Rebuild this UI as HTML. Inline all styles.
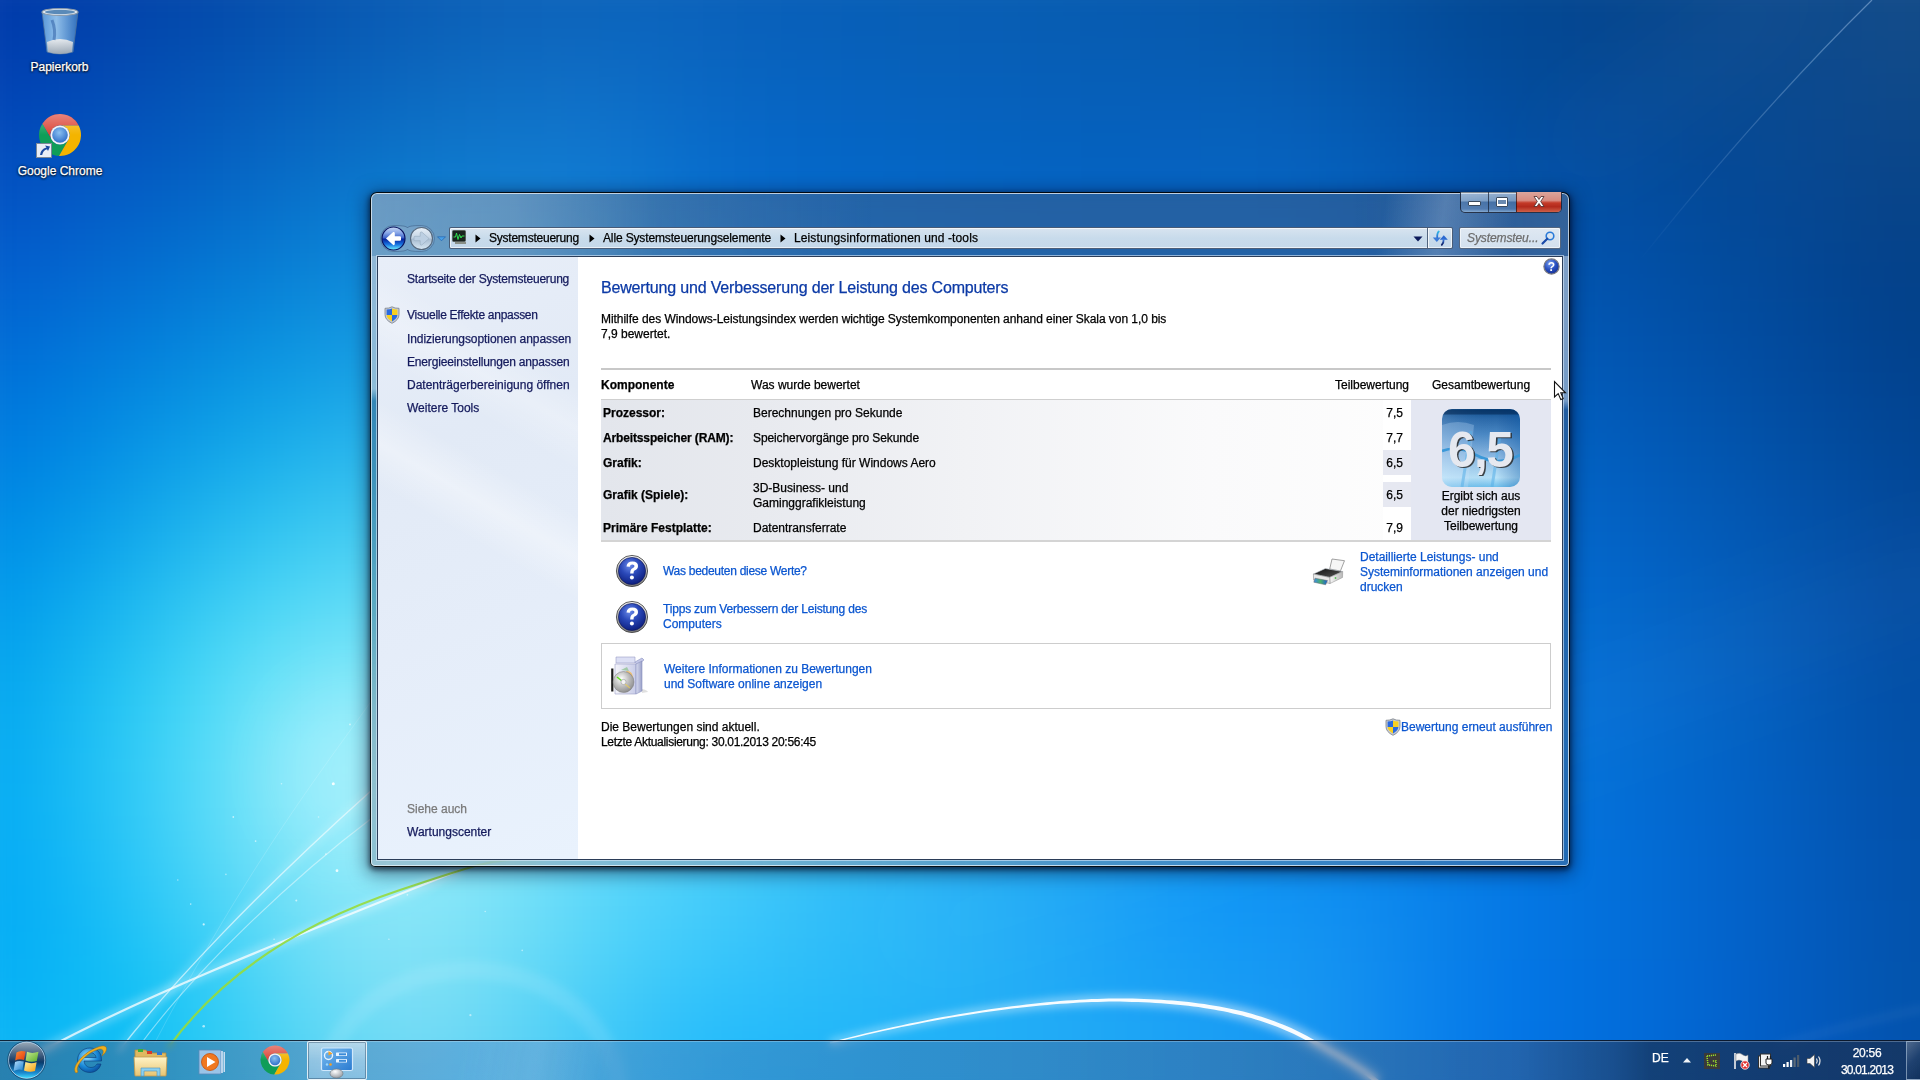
<!DOCTYPE html>
<html><head><meta charset="utf-8">
<style>
html,body{margin:0;padding:0;}
body{width:1920px;height:1080px;overflow:hidden;position:relative;font-family:"Liberation Sans",sans-serif;font-size:12px;color:#000;}
.a{position:absolute;white-space:nowrap;line-height:15px;-webkit-text-stroke:0.25px currentColor;}
/* window */
#win{position:absolute;left:370px;top:192px;width:1200px;height:675px;box-sizing:border-box;border:1px solid rgba(0,0,0,0.9);border-radius:7px 7px 5px 5px;
 box-shadow:0 2px 5px 1px rgba(0,0,20,0.55), 0 4px 18px 3px rgba(0,10,40,0.5), inset 0 0 0 1px rgba(255,255,255,0.7);
 backdrop-filter:blur(8px);
 background:rgba(85,92,112,0.38);}
#wintitle{position:absolute;left:371px;top:193px;width:1198px;height:63px;border-radius:6px 6px 0 0;
 background:
  linear-gradient(100deg, rgba(230,235,240,0.0) 0%, rgba(230,235,240,0.0) 84%, rgba(210,222,238,0.26) 89%, rgba(200,215,235,0.0) 95%),
  linear-gradient(90deg, rgba(225,232,238,0.36) 0%, rgba(220,228,236,0.3) 12%, rgba(170,180,195,0.12) 24%, rgba(90,95,115,0.0) 42%, rgba(85,90,110,0.0) 82%, rgba(140,150,170,0.1) 94%, rgba(170,185,205,0.14) 100%);}
#winleft{position:absolute;left:371px;top:256px;width:6px;height:604px;
 background:linear-gradient(180deg, rgba(230,238,245,0.55) 0%, rgba(230,238,245,0.5) 22%, rgba(60,110,160,0.15) 24%, rgba(120,170,210,0.0) 60%, rgba(200,235,250,0.25) 100%);}
#winright{position:absolute;left:1563px;top:256px;width:6px;height:604px;
 background:linear-gradient(180deg, rgba(220,232,245,0.5) 0%, rgba(220,232,245,0.45) 24%, rgba(60,110,160,0.0) 25.5%, rgba(120,170,210,0.0) 100%);}
#winbottom{position:absolute;left:371px;top:860px;width:1198px;height:6px;border-radius:0 0 4px 4px;
 background:linear-gradient(90deg, rgba(210,230,245,0.35) 0%, rgba(210,230,245,0.3) 30%, rgba(200,220,240,0.15) 60%, rgba(180,200,230,0.05) 100%);}
#content{position:absolute;left:377px;top:256px;width:1186px;height:604px;box-sizing:border-box;border:1px solid rgba(20,40,70,0.9);background:#fff;
 box-shadow:0 0 0 1px rgba(220,235,250,0.6);}
#lpanel{position:absolute;left:378px;top:257px;width:200px;height:602px;
 background:
  linear-gradient(30deg, rgba(255,255,255,0) 0%, rgba(255,255,255,0) 52%, rgba(255,255,255,0.35) 58%, rgba(255,255,255,0) 64%, rgba(255,255,255,0) 70%, rgba(255,255,255,0.25) 76%, rgba(255,255,255,0) 82%),
  linear-gradient(160deg,#e8eef8 0%,#e2eaf6 30%,#e5edf9 60%,#e9f2fd 100%);}
.lnk{color:#141a5c;}
.blue{color:#0b56d0;}
</style></head>
<body>
<svg id="wallsvg" style="position:absolute;left:0;top:0" width="1920" height="1080" viewBox="0 0 1920 1080"><defs><filter id="wb" color-interpolation-filters="sRGB" x="-5%" y="-5%" width="110%" height="110%"><feGaussianBlur stdDeviation="30" color-interpolation-filters="sRGB"/></filter></defs><g filter="url(#wb)"><rect x="-60" y="-60" width="60" height="60" fill="#0038a8"/><rect x="0" y="-60" width="60" height="60" fill="#003aa8"/><rect x="60" y="-60" width="60" height="60" fill="#013fa8"/><rect x="120" y="-60" width="60" height="60" fill="#0344a9"/><rect x="180" y="-60" width="60" height="60" fill="#0449a9"/><rect x="240" y="-60" width="60" height="60" fill="#064fac"/><rect x="300" y="-60" width="60" height="60" fill="#0755af"/><rect x="360" y="-60" width="60" height="60" fill="#095ab2"/><rect x="420" y="-60" width="60" height="60" fill="#0b5eb5"/><rect x="480" y="-60" width="60" height="60" fill="#0c61b8"/><rect x="540" y="-60" width="60" height="60" fill="#0d62b9"/><rect x="600" y="-60" width="60" height="60" fill="#0c62b9"/><rect x="660" y="-60" width="60" height="60" fill="#0b61b9"/><rect x="720" y="-60" width="60" height="60" fill="#095fb8"/><rect x="780" y="-60" width="60" height="60" fill="#085eb6"/><rect x="840" y="-60" width="60" height="60" fill="#085eb5"/><rect x="900" y="-60" width="60" height="60" fill="#085db3"/><rect x="960" y="-60" width="60" height="60" fill="#085db2"/><rect x="1020" y="-60" width="60" height="60" fill="#085cb0"/><rect x="1080" y="-60" width="60" height="60" fill="#075aae"/><rect x="1140" y="-60" width="60" height="60" fill="#0759ad"/><rect x="1200" y="-60" width="60" height="60" fill="#0758aa"/><rect x="1260" y="-60" width="60" height="60" fill="#0655a7"/><rect x="1320" y="-60" width="60" height="60" fill="#0552a2"/><rect x="1380" y="-60" width="60" height="60" fill="#044e9b"/><rect x="1440" y="-60" width="60" height="60" fill="#044995"/><rect x="1500" y="-60" width="60" height="60" fill="#044791"/><rect x="1560" y="-60" width="60" height="60" fill="#05468e"/><rect x="1620" y="-60" width="60" height="60" fill="#08478d"/><rect x="1680" y="-60" width="60" height="60" fill="#0a488c"/><rect x="1740" y="-60" width="60" height="60" fill="#0d498c"/><rect x="1800" y="-60" width="60" height="60" fill="#104a8b"/><rect x="1860" y="-60" width="60" height="60" fill="#134b89"/><rect x="1920" y="-60" width="60" height="60" fill="#144a87"/><rect x="1980" y="-60" width="60" height="60" fill="#144a87"/><rect x="-60" y="0" width="60" height="60" fill="#003bac"/><rect x="0" y="0" width="60" height="60" fill="#003eac"/><rect x="60" y="0" width="60" height="60" fill="#0242ac"/><rect x="120" y="0" width="60" height="60" fill="#0348ad"/><rect x="180" y="0" width="60" height="60" fill="#044dae"/><rect x="240" y="0" width="60" height="60" fill="#0653b0"/><rect x="300" y="0" width="60" height="60" fill="#0859b3"/><rect x="360" y="0" width="60" height="60" fill="#0a5eb7"/><rect x="420" y="0" width="60" height="60" fill="#0c62b9"/><rect x="480" y="0" width="60" height="60" fill="#0d65bc"/><rect x="540" y="0" width="60" height="60" fill="#0d66bd"/><rect x="600" y="0" width="60" height="60" fill="#0c66be"/><rect x="660" y="0" width="60" height="60" fill="#0b64bd"/><rect x="720" y="0" width="60" height="60" fill="#0961bb"/><rect x="780" y="0" width="60" height="60" fill="#0860ba"/><rect x="840" y="0" width="60" height="60" fill="#075fb8"/><rect x="900" y="0" width="60" height="60" fill="#085fb6"/><rect x="960" y="0" width="60" height="60" fill="#085eb5"/><rect x="1020" y="0" width="60" height="60" fill="#075db3"/><rect x="1080" y="0" width="60" height="60" fill="#075cb2"/><rect x="1140" y="0" width="60" height="60" fill="#075bb0"/><rect x="1200" y="0" width="60" height="60" fill="#065aae"/><rect x="1260" y="0" width="60" height="60" fill="#0658ab"/><rect x="1320" y="0" width="60" height="60" fill="#0554a6"/><rect x="1380" y="0" width="60" height="60" fill="#044f9f"/><rect x="1440" y="0" width="60" height="60" fill="#034b99"/><rect x="1500" y="0" width="60" height="60" fill="#034894"/><rect x="1560" y="0" width="60" height="60" fill="#054791"/><rect x="1620" y="0" width="60" height="60" fill="#07478f"/><rect x="1680" y="0" width="60" height="60" fill="#09488e"/><rect x="1740" y="0" width="60" height="60" fill="#0c498d"/><rect x="1800" y="0" width="60" height="60" fill="#0f4a8c"/><rect x="1860" y="0" width="60" height="60" fill="#124b8a"/><rect x="1920" y="0" width="60" height="60" fill="#124a88"/><rect x="1980" y="0" width="60" height="60" fill="#124a88"/><rect x="-60" y="60" width="60" height="60" fill="#0043b4"/><rect x="0" y="60" width="60" height="60" fill="#0145b5"/><rect x="60" y="60" width="60" height="60" fill="#024ab5"/><rect x="120" y="60" width="60" height="60" fill="#0450b5"/><rect x="180" y="60" width="60" height="60" fill="#0556b7"/><rect x="240" y="60" width="60" height="60" fill="#065cb9"/><rect x="300" y="60" width="60" height="60" fill="#0862bc"/><rect x="360" y="60" width="60" height="60" fill="#0b67bf"/><rect x="420" y="60" width="60" height="60" fill="#0d6cc2"/><rect x="480" y="60" width="60" height="60" fill="#0e6ec4"/><rect x="540" y="60" width="60" height="60" fill="#0f6fc6"/><rect x="600" y="60" width="60" height="60" fill="#0d6cc5"/><rect x="660" y="60" width="60" height="60" fill="#0a68c4"/><rect x="720" y="60" width="60" height="60" fill="#0865c2"/><rect x="780" y="60" width="60" height="60" fill="#0663c0"/><rect x="840" y="60" width="60" height="60" fill="#0662be"/><rect x="900" y="60" width="60" height="60" fill="#0661bc"/><rect x="960" y="60" width="60" height="60" fill="#0660bb"/><rect x="1020" y="60" width="60" height="60" fill="#065fb9"/><rect x="1080" y="60" width="60" height="60" fill="#065fb8"/><rect x="1140" y="60" width="60" height="60" fill="#065eb7"/><rect x="1200" y="60" width="60" height="60" fill="#065eb6"/><rect x="1260" y="60" width="60" height="60" fill="#065cb3"/><rect x="1320" y="60" width="60" height="60" fill="#0558ae"/><rect x="1380" y="60" width="60" height="60" fill="#0453a7"/><rect x="1440" y="60" width="60" height="60" fill="#034ea1"/><rect x="1500" y="60" width="60" height="60" fill="#034b9b"/><rect x="1560" y="60" width="60" height="60" fill="#044997"/><rect x="1620" y="60" width="60" height="60" fill="#054994"/><rect x="1680" y="60" width="60" height="60" fill="#074992"/><rect x="1740" y="60" width="60" height="60" fill="#0a4990"/><rect x="1800" y="60" width="60" height="60" fill="#0c498e"/><rect x="1860" y="60" width="60" height="60" fill="#0e498a"/><rect x="1920" y="60" width="60" height="60" fill="#0f4888"/><rect x="1980" y="60" width="60" height="60" fill="#0f4888"/><rect x="-60" y="120" width="60" height="60" fill="#014bbd"/><rect x="0" y="120" width="60" height="60" fill="#024ebd"/><rect x="60" y="120" width="60" height="60" fill="#0353be"/><rect x="120" y="120" width="60" height="60" fill="#0458bf"/><rect x="180" y="120" width="60" height="60" fill="#055fc0"/><rect x="240" y="120" width="60" height="60" fill="#0766c2"/><rect x="300" y="120" width="60" height="60" fill="#096cc5"/><rect x="360" y="120" width="60" height="60" fill="#0c72c8"/><rect x="420" y="120" width="60" height="60" fill="#0e75ca"/><rect x="480" y="120" width="60" height="60" fill="#1077cc"/><rect x="540" y="120" width="60" height="60" fill="#1077cd"/><rect x="600" y="120" width="60" height="60" fill="#0e73cd"/><rect x="660" y="120" width="60" height="60" fill="#096dca"/><rect x="720" y="120" width="60" height="60" fill="#0768c8"/><rect x="780" y="120" width="60" height="60" fill="#0566c6"/><rect x="840" y="120" width="60" height="60" fill="#0565c4"/><rect x="900" y="120" width="60" height="60" fill="#0564c2"/><rect x="960" y="120" width="60" height="60" fill="#0563c0"/><rect x="1020" y="120" width="60" height="60" fill="#0562bf"/><rect x="1080" y="120" width="60" height="60" fill="#0561be"/><rect x="1140" y="120" width="60" height="60" fill="#0661be"/><rect x="1200" y="120" width="60" height="60" fill="#0662bd"/><rect x="1260" y="120" width="60" height="60" fill="#0661bc"/><rect x="1320" y="120" width="60" height="60" fill="#055db7"/><rect x="1380" y="120" width="60" height="60" fill="#0457b0"/><rect x="1440" y="120" width="60" height="60" fill="#0352a9"/><rect x="1500" y="120" width="60" height="60" fill="#034ea3"/><rect x="1560" y="120" width="60" height="60" fill="#034c9e"/><rect x="1620" y="120" width="60" height="60" fill="#044a9a"/><rect x="1680" y="120" width="60" height="60" fill="#054996"/><rect x="1740" y="120" width="60" height="60" fill="#074993"/><rect x="1800" y="120" width="60" height="60" fill="#09488f"/><rect x="1860" y="120" width="60" height="60" fill="#0b468a"/><rect x="1920" y="120" width="60" height="60" fill="#0b4688"/><rect x="1980" y="120" width="60" height="60" fill="#0b4688"/><rect x="-60" y="180" width="60" height="60" fill="#0154c5"/><rect x="0" y="180" width="60" height="60" fill="#0357c6"/><rect x="60" y="180" width="60" height="60" fill="#045dc7"/><rect x="120" y="180" width="60" height="60" fill="#0463c8"/><rect x="180" y="180" width="60" height="60" fill="#056ac9"/><rect x="240" y="180" width="60" height="60" fill="#0771cc"/><rect x="300" y="180" width="60" height="60" fill="#0a78ce"/><rect x="360" y="180" width="60" height="60" fill="#0d7dd0"/><rect x="420" y="180" width="60" height="60" fill="#1080d2"/><rect x="480" y="180" width="60" height="60" fill="#1280d3"/><rect x="540" y="180" width="60" height="60" fill="#127ed4"/><rect x="600" y="180" width="60" height="60" fill="#0e79d2"/><rect x="660" y="180" width="60" height="60" fill="#0971d0"/><rect x="720" y="180" width="60" height="60" fill="#076ccd"/><rect x="780" y="180" width="60" height="60" fill="#066acb"/><rect x="840" y="180" width="60" height="60" fill="#0669ca"/><rect x="900" y="180" width="60" height="60" fill="#0667c8"/><rect x="960" y="180" width="60" height="60" fill="#0566c6"/><rect x="1020" y="180" width="60" height="60" fill="#0564c4"/><rect x="1080" y="180" width="60" height="60" fill="#0564c3"/><rect x="1140" y="180" width="60" height="60" fill="#0564c3"/><rect x="1200" y="180" width="60" height="60" fill="#0664c3"/><rect x="1260" y="180" width="60" height="60" fill="#0663c2"/><rect x="1320" y="180" width="60" height="60" fill="#0560bd"/><rect x="1380" y="180" width="60" height="60" fill="#045bb7"/><rect x="1440" y="180" width="60" height="60" fill="#0456b1"/><rect x="1500" y="180" width="60" height="60" fill="#0352aa"/><rect x="1560" y="180" width="60" height="60" fill="#024fa5"/><rect x="1620" y="180" width="60" height="60" fill="#034da0"/><rect x="1680" y="180" width="60" height="60" fill="#034a9a"/><rect x="1740" y="180" width="60" height="60" fill="#054895"/><rect x="1800" y="180" width="60" height="60" fill="#064690"/><rect x="1860" y="180" width="60" height="60" fill="#07448a"/><rect x="1920" y="180" width="60" height="60" fill="#084388"/><rect x="1980" y="180" width="60" height="60" fill="#084388"/><rect x="-60" y="240" width="60" height="60" fill="#015ecd"/><rect x="0" y="240" width="60" height="60" fill="#0361ce"/><rect x="60" y="240" width="60" height="60" fill="#0468cf"/><rect x="120" y="240" width="60" height="60" fill="#046fd1"/><rect x="180" y="240" width="60" height="60" fill="#0577d3"/><rect x="240" y="240" width="60" height="60" fill="#087ed5"/><rect x="300" y="240" width="60" height="60" fill="#0c85d7"/><rect x="360" y="240" width="60" height="60" fill="#1089d8"/><rect x="420" y="240" width="60" height="60" fill="#148bda"/><rect x="480" y="240" width="60" height="60" fill="#168ada"/><rect x="540" y="240" width="60" height="60" fill="#1587da"/><rect x="600" y="240" width="60" height="60" fill="#1280d8"/><rect x="660" y="240" width="60" height="60" fill="#0d79d6"/><rect x="720" y="240" width="60" height="60" fill="#0a74d3"/><rect x="780" y="240" width="60" height="60" fill="#0971d1"/><rect x="840" y="240" width="60" height="60" fill="#086fcf"/><rect x="900" y="240" width="60" height="60" fill="#076dcd"/><rect x="960" y="240" width="60" height="60" fill="#076bcc"/><rect x="1020" y="240" width="60" height="60" fill="#0669ca"/><rect x="1080" y="240" width="60" height="60" fill="#0668c9"/><rect x="1140" y="240" width="60" height="60" fill="#0568c9"/><rect x="1200" y="240" width="60" height="60" fill="#0567c9"/><rect x="1260" y="240" width="60" height="60" fill="#0566c7"/><rect x="1320" y="240" width="60" height="60" fill="#0563c3"/><rect x="1380" y="240" width="60" height="60" fill="#045ebe"/><rect x="1440" y="240" width="60" height="60" fill="#045ab8"/><rect x="1500" y="240" width="60" height="60" fill="#0356b2"/><rect x="1560" y="240" width="60" height="60" fill="#0252ac"/><rect x="1620" y="240" width="60" height="60" fill="#024fa5"/><rect x="1680" y="240" width="60" height="60" fill="#024c9f"/><rect x="1740" y="240" width="60" height="60" fill="#034998"/><rect x="1800" y="240" width="60" height="60" fill="#034592"/><rect x="1860" y="240" width="60" height="60" fill="#04428b"/><rect x="1920" y="240" width="60" height="60" fill="#054188"/><rect x="1980" y="240" width="60" height="60" fill="#054188"/><rect x="-60" y="300" width="60" height="60" fill="#0068d4"/><rect x="0" y="300" width="60" height="60" fill="#016cd5"/><rect x="60" y="300" width="60" height="60" fill="#0374d7"/><rect x="120" y="300" width="60" height="60" fill="#047cd9"/><rect x="180" y="300" width="60" height="60" fill="#0685db"/><rect x="240" y="300" width="60" height="60" fill="#0a8ddd"/><rect x="300" y="300" width="60" height="60" fill="#1094df"/><rect x="360" y="300" width="60" height="60" fill="#1697e0"/><rect x="420" y="300" width="60" height="60" fill="#1a98e0"/><rect x="480" y="300" width="60" height="60" fill="#1c96e0"/><rect x="540" y="300" width="60" height="60" fill="#1c92df"/><rect x="600" y="300" width="60" height="60" fill="#198bde"/><rect x="660" y="300" width="60" height="60" fill="#1485db"/><rect x="720" y="300" width="60" height="60" fill="#117fd9"/><rect x="780" y="300" width="60" height="60" fill="#0e7bd7"/><rect x="840" y="300" width="60" height="60" fill="#0c77d5"/><rect x="900" y="300" width="60" height="60" fill="#0b74d4"/><rect x="960" y="300" width="60" height="60" fill="#0972d2"/><rect x="1020" y="300" width="60" height="60" fill="#086fd1"/><rect x="1080" y="300" width="60" height="60" fill="#076dd0"/><rect x="1140" y="300" width="60" height="60" fill="#066ccf"/><rect x="1200" y="300" width="60" height="60" fill="#066bce"/><rect x="1260" y="300" width="60" height="60" fill="#0569cc"/><rect x="1320" y="300" width="60" height="60" fill="#0566c9"/><rect x="1380" y="300" width="60" height="60" fill="#0462c4"/><rect x="1440" y="300" width="60" height="60" fill="#035ebe"/><rect x="1500" y="300" width="60" height="60" fill="#035ab8"/><rect x="1560" y="300" width="60" height="60" fill="#0256b2"/><rect x="1620" y="300" width="60" height="60" fill="#0252ab"/><rect x="1680" y="300" width="60" height="60" fill="#024ea4"/><rect x="1740" y="300" width="60" height="60" fill="#024a9d"/><rect x="1800" y="300" width="60" height="60" fill="#024695"/><rect x="1860" y="300" width="60" height="60" fill="#02428d"/><rect x="1920" y="300" width="60" height="60" fill="#03418a"/><rect x="1980" y="300" width="60" height="60" fill="#03418a"/><rect x="-60" y="360" width="60" height="60" fill="#0073da"/><rect x="0" y="360" width="60" height="60" fill="#0077db"/><rect x="60" y="360" width="60" height="60" fill="#0280de"/><rect x="120" y="360" width="60" height="60" fill="#058ae0"/><rect x="180" y="360" width="60" height="60" fill="#0994e2"/><rect x="240" y="360" width="60" height="60" fill="#0f9de5"/><rect x="300" y="360" width="60" height="60" fill="#17a3e6"/><rect x="360" y="360" width="60" height="60" fill="#1fa6e6"/><rect x="420" y="360" width="60" height="60" fill="#24a6e6"/><rect x="480" y="360" width="60" height="60" fill="#27a4e6"/><rect x="540" y="360" width="60" height="60" fill="#269fe5"/><rect x="600" y="360" width="60" height="60" fill="#2298e3"/><rect x="660" y="360" width="60" height="60" fill="#1e91e1"/><rect x="720" y="360" width="60" height="60" fill="#198bdf"/><rect x="780" y="360" width="60" height="60" fill="#1585dd"/><rect x="840" y="360" width="60" height="60" fill="#1281db"/><rect x="900" y="360" width="60" height="60" fill="#0f7dd9"/><rect x="960" y="360" width="60" height="60" fill="#0d79d8"/><rect x="1020" y="360" width="60" height="60" fill="#0a76d7"/><rect x="1080" y="360" width="60" height="60" fill="#0974d6"/><rect x="1140" y="360" width="60" height="60" fill="#0772d5"/><rect x="1200" y="360" width="60" height="60" fill="#066fd3"/><rect x="1260" y="360" width="60" height="60" fill="#056dd1"/><rect x="1320" y="360" width="60" height="60" fill="#056ace"/><rect x="1380" y="360" width="60" height="60" fill="#0466ca"/><rect x="1440" y="360" width="60" height="60" fill="#0362c5"/><rect x="1500" y="360" width="60" height="60" fill="#035ebf"/><rect x="1560" y="360" width="60" height="60" fill="#025ab8"/><rect x="1620" y="360" width="60" height="60" fill="#0256b2"/><rect x="1680" y="360" width="60" height="60" fill="#0252aa"/><rect x="1740" y="360" width="60" height="60" fill="#024da2"/><rect x="1800" y="360" width="60" height="60" fill="#02489a"/><rect x="1860" y="360" width="60" height="60" fill="#024492"/><rect x="1920" y="360" width="60" height="60" fill="#02428e"/><rect x="1980" y="360" width="60" height="60" fill="#02428e"/><rect x="-60" y="420" width="60" height="60" fill="#007de0"/><rect x="0" y="420" width="60" height="60" fill="#0082e1"/><rect x="60" y="420" width="60" height="60" fill="#048ce3"/><rect x="120" y="420" width="60" height="60" fill="#0a98e6"/><rect x="180" y="420" width="60" height="60" fill="#11a3e8"/><rect x="240" y="420" width="60" height="60" fill="#1aadea"/><rect x="300" y="420" width="60" height="60" fill="#25b4ec"/><rect x="360" y="420" width="60" height="60" fill="#2db6ec"/><rect x="420" y="420" width="60" height="60" fill="#33b5ec"/><rect x="480" y="420" width="60" height="60" fill="#34b2eb"/><rect x="540" y="420" width="60" height="60" fill="#32acea"/><rect x="600" y="420" width="60" height="60" fill="#2ea5e8"/><rect x="660" y="420" width="60" height="60" fill="#299ee6"/><rect x="720" y="420" width="60" height="60" fill="#2397e4"/><rect x="780" y="420" width="60" height="60" fill="#1d90e3"/><rect x="840" y="420" width="60" height="60" fill="#198be1"/><rect x="900" y="420" width="60" height="60" fill="#1486df"/><rect x="960" y="420" width="60" height="60" fill="#1181de"/><rect x="1020" y="420" width="60" height="60" fill="#0d7edd"/><rect x="1080" y="420" width="60" height="60" fill="#0b7adc"/><rect x="1140" y="420" width="60" height="60" fill="#0977da"/><rect x="1200" y="420" width="60" height="60" fill="#0774d9"/><rect x="1260" y="420" width="60" height="60" fill="#0671d7"/><rect x="1320" y="420" width="60" height="60" fill="#056ed4"/><rect x="1380" y="420" width="60" height="60" fill="#046ad0"/><rect x="1440" y="420" width="60" height="60" fill="#0367cb"/><rect x="1500" y="420" width="60" height="60" fill="#0363c5"/><rect x="1560" y="420" width="60" height="60" fill="#025fbf"/><rect x="1620" y="420" width="60" height="60" fill="#025ab8"/><rect x="1680" y="420" width="60" height="60" fill="#0256b0"/><rect x="1740" y="420" width="60" height="60" fill="#0251a8"/><rect x="1800" y="420" width="60" height="60" fill="#024c9f"/><rect x="1860" y="420" width="60" height="60" fill="#024797"/><rect x="1920" y="420" width="60" height="60" fill="#024593"/><rect x="1980" y="420" width="60" height="60" fill="#024593"/><rect x="-60" y="480" width="60" height="60" fill="#0088e4"/><rect x="0" y="480" width="60" height="60" fill="#008ee5"/><rect x="60" y="480" width="60" height="60" fill="#0899e8"/><rect x="120" y="480" width="60" height="60" fill="#12a6ea"/><rect x="180" y="480" width="60" height="60" fill="#1eb3ed"/><rect x="240" y="480" width="60" height="60" fill="#2bbeef"/><rect x="300" y="480" width="60" height="60" fill="#37c4f0"/><rect x="360" y="480" width="60" height="60" fill="#40c6f1"/><rect x="420" y="480" width="60" height="60" fill="#44c4f0"/><rect x="480" y="480" width="60" height="60" fill="#44c0f0"/><rect x="540" y="480" width="60" height="60" fill="#41b9ee"/><rect x="600" y="480" width="60" height="60" fill="#3bb2ed"/><rect x="660" y="480" width="60" height="60" fill="#34aaeb"/><rect x="720" y="480" width="60" height="60" fill="#2ca3e9"/><rect x="780" y="480" width="60" height="60" fill="#269ce8"/><rect x="840" y="480" width="60" height="60" fill="#1f95e6"/><rect x="900" y="480" width="60" height="60" fill="#1a8fe4"/><rect x="960" y="480" width="60" height="60" fill="#158ae3"/><rect x="1020" y="480" width="60" height="60" fill="#1085e2"/><rect x="1080" y="480" width="60" height="60" fill="#0d81e1"/><rect x="1140" y="480" width="60" height="60" fill="#0a7de0"/><rect x="1200" y="480" width="60" height="60" fill="#087ade"/><rect x="1260" y="480" width="60" height="60" fill="#0676dc"/><rect x="1320" y="480" width="60" height="60" fill="#0573d9"/><rect x="1380" y="480" width="60" height="60" fill="#046fd5"/><rect x="1440" y="480" width="60" height="60" fill="#036bd0"/><rect x="1500" y="480" width="60" height="60" fill="#0367cb"/><rect x="1560" y="480" width="60" height="60" fill="#0363c5"/><rect x="1620" y="480" width="60" height="60" fill="#035ebe"/><rect x="1680" y="480" width="60" height="60" fill="#035ab6"/><rect x="1740" y="480" width="60" height="60" fill="#0354ae"/><rect x="1800" y="480" width="60" height="60" fill="#034fa5"/><rect x="1860" y="480" width="60" height="60" fill="#034a9c"/><rect x="1920" y="480" width="60" height="60" fill="#034798"/><rect x="1980" y="480" width="60" height="60" fill="#034798"/><rect x="-60" y="540" width="60" height="60" fill="#0094e9"/><rect x="0" y="540" width="60" height="60" fill="#0399ea"/><rect x="60" y="540" width="60" height="60" fill="#0ea6ec"/><rect x="120" y="540" width="60" height="60" fill="#1db5ee"/><rect x="180" y="540" width="60" height="60" fill="#2ec2f1"/><rect x="240" y="540" width="60" height="60" fill="#3fcdf3"/><rect x="300" y="540" width="60" height="60" fill="#4dd3f4"/><rect x="360" y="540" width="60" height="60" fill="#56d4f5"/><rect x="420" y="540" width="60" height="60" fill="#58d1f4"/><rect x="480" y="540" width="60" height="60" fill="#56ccf3"/><rect x="540" y="540" width="60" height="60" fill="#4fc5f2"/><rect x="600" y="540" width="60" height="60" fill="#47bef1"/><rect x="660" y="540" width="60" height="60" fill="#3eb6ef"/><rect x="720" y="540" width="60" height="60" fill="#35adee"/><rect x="780" y="540" width="60" height="60" fill="#2da6ec"/><rect x="840" y="540" width="60" height="60" fill="#269feb"/><rect x="900" y="540" width="60" height="60" fill="#1f98e9"/><rect x="960" y="540" width="60" height="60" fill="#1992e8"/><rect x="1020" y="540" width="60" height="60" fill="#148ce7"/><rect x="1080" y="540" width="60" height="60" fill="#0f87e6"/><rect x="1140" y="540" width="60" height="60" fill="#0b83e5"/><rect x="1200" y="540" width="60" height="60" fill="#097fe3"/><rect x="1260" y="540" width="60" height="60" fill="#077be1"/><rect x="1320" y="540" width="60" height="60" fill="#0577de"/><rect x="1380" y="540" width="60" height="60" fill="#0473da"/><rect x="1440" y="540" width="60" height="60" fill="#036fd6"/><rect x="1500" y="540" width="60" height="60" fill="#036bd1"/><rect x="1560" y="540" width="60" height="60" fill="#0367cb"/><rect x="1620" y="540" width="60" height="60" fill="#0362c4"/><rect x="1680" y="540" width="60" height="60" fill="#035dbc"/><rect x="1740" y="540" width="60" height="60" fill="#0358b3"/><rect x="1800" y="540" width="60" height="60" fill="#0352aa"/><rect x="1860" y="540" width="60" height="60" fill="#034ca1"/><rect x="1920" y="540" width="60" height="60" fill="#034a9c"/><rect x="1980" y="540" width="60" height="60" fill="#034a9c"/><rect x="-60" y="600" width="60" height="60" fill="#019dec"/><rect x="0" y="600" width="60" height="60" fill="#07a4ed"/><rect x="60" y="600" width="60" height="60" fill="#15b3ef"/><rect x="120" y="600" width="60" height="60" fill="#28c2f2"/><rect x="180" y="600" width="60" height="60" fill="#3fd0f4"/><rect x="240" y="600" width="60" height="60" fill="#55daf6"/><rect x="300" y="600" width="60" height="60" fill="#66dff7"/><rect x="360" y="600" width="60" height="60" fill="#6de0f7"/><rect x="420" y="600" width="60" height="60" fill="#6ddcf7"/><rect x="480" y="600" width="60" height="60" fill="#67d7f6"/><rect x="540" y="600" width="60" height="60" fill="#5dd0f5"/><rect x="600" y="600" width="60" height="60" fill="#52c8f4"/><rect x="660" y="600" width="60" height="60" fill="#47bff3"/><rect x="720" y="600" width="60" height="60" fill="#3db7f1"/><rect x="780" y="600" width="60" height="60" fill="#34aff0"/><rect x="840" y="600" width="60" height="60" fill="#2ba7ee"/><rect x="900" y="600" width="60" height="60" fill="#23a0ed"/><rect x="960" y="600" width="60" height="60" fill="#1c99ec"/><rect x="1020" y="600" width="60" height="60" fill="#1693eb"/><rect x="1080" y="600" width="60" height="60" fill="#118eea"/><rect x="1140" y="600" width="60" height="60" fill="#0d88e9"/><rect x="1200" y="600" width="60" height="60" fill="#0984e8"/><rect x="1260" y="600" width="60" height="60" fill="#077fe5"/><rect x="1320" y="600" width="60" height="60" fill="#067be3"/><rect x="1380" y="600" width="60" height="60" fill="#0577df"/><rect x="1440" y="600" width="60" height="60" fill="#0473db"/><rect x="1500" y="600" width="60" height="60" fill="#036fd6"/><rect x="1560" y="600" width="60" height="60" fill="#036bd0"/><rect x="1620" y="600" width="60" height="60" fill="#0366c9"/><rect x="1680" y="600" width="60" height="60" fill="#0361c1"/><rect x="1740" y="600" width="60" height="60" fill="#035bb8"/><rect x="1800" y="600" width="60" height="60" fill="#0354ae"/><rect x="1860" y="600" width="60" height="60" fill="#034fa5"/><rect x="1920" y="600" width="60" height="60" fill="#034ca0"/><rect x="1980" y="600" width="60" height="60" fill="#034ca0"/><rect x="-60" y="660" width="60" height="60" fill="#04a5ef"/><rect x="0" y="660" width="60" height="60" fill="#0aacf0"/><rect x="60" y="660" width="60" height="60" fill="#1bbcf2"/><rect x="120" y="660" width="60" height="60" fill="#31ccf4"/><rect x="180" y="660" width="60" height="60" fill="#4ed9f6"/><rect x="240" y="660" width="60" height="60" fill="#6be2f8"/><rect x="300" y="660" width="60" height="60" fill="#7ee7f9"/><rect x="360" y="660" width="60" height="60" fill="#83e8f9"/><rect x="420" y="660" width="60" height="60" fill="#7ee4f9"/><rect x="480" y="660" width="60" height="60" fill="#74def8"/><rect x="540" y="660" width="60" height="60" fill="#68d7f8"/><rect x="600" y="660" width="60" height="60" fill="#5bcff7"/><rect x="660" y="660" width="60" height="60" fill="#4ec7f6"/><rect x="720" y="660" width="60" height="60" fill="#42bff4"/><rect x="780" y="660" width="60" height="60" fill="#38b6f3"/><rect x="840" y="660" width="60" height="60" fill="#2faff2"/><rect x="900" y="660" width="60" height="60" fill="#27a7f0"/><rect x="960" y="660" width="60" height="60" fill="#1fa0ef"/><rect x="1020" y="660" width="60" height="60" fill="#1999ef"/><rect x="1080" y="660" width="60" height="60" fill="#1393ee"/><rect x="1140" y="660" width="60" height="60" fill="#0e8ded"/><rect x="1200" y="660" width="60" height="60" fill="#0a88ec"/><rect x="1260" y="660" width="60" height="60" fill="#0884ea"/><rect x="1320" y="660" width="60" height="60" fill="#067fe7"/><rect x="1380" y="660" width="60" height="60" fill="#057be3"/><rect x="1440" y="660" width="60" height="60" fill="#0477df"/><rect x="1500" y="660" width="60" height="60" fill="#0472da"/><rect x="1560" y="660" width="60" height="60" fill="#036ed4"/><rect x="1620" y="660" width="60" height="60" fill="#0369cd"/><rect x="1680" y="660" width="60" height="60" fill="#0363c5"/><rect x="1740" y="660" width="60" height="60" fill="#035dbc"/><rect x="1800" y="660" width="60" height="60" fill="#0356b2"/><rect x="1860" y="660" width="60" height="60" fill="#0350a8"/><rect x="1920" y="660" width="60" height="60" fill="#034ea3"/><rect x="1980" y="660" width="60" height="60" fill="#034ea3"/><rect x="-60" y="720" width="60" height="60" fill="#05a9f1"/><rect x="0" y="720" width="60" height="60" fill="#0cb0f2"/><rect x="60" y="720" width="60" height="60" fill="#1fbff4"/><rect x="120" y="720" width="60" height="60" fill="#38cff6"/><rect x="180" y="720" width="60" height="60" fill="#59dcf8"/><rect x="240" y="720" width="60" height="60" fill="#7be6f9"/><rect x="300" y="720" width="60" height="60" fill="#90ecfa"/><rect x="360" y="720" width="60" height="60" fill="#92ecfa"/><rect x="420" y="720" width="60" height="60" fill="#8ae8fa"/><rect x="480" y="720" width="60" height="60" fill="#7de3fa"/><rect x="540" y="720" width="60" height="60" fill="#6edcf9"/><rect x="600" y="720" width="60" height="60" fill="#5ed4f9"/><rect x="660" y="720" width="60" height="60" fill="#51ccf8"/><rect x="720" y="720" width="60" height="60" fill="#45c4f7"/><rect x="780" y="720" width="60" height="60" fill="#3abcf5"/><rect x="840" y="720" width="60" height="60" fill="#31b4f4"/><rect x="900" y="720" width="60" height="60" fill="#29adf3"/><rect x="960" y="720" width="60" height="60" fill="#22a6f2"/><rect x="1020" y="720" width="60" height="60" fill="#1b9ff2"/><rect x="1080" y="720" width="60" height="60" fill="#1498f1"/><rect x="1140" y="720" width="60" height="60" fill="#0f92f0"/><rect x="1200" y="720" width="60" height="60" fill="#0b8cef"/><rect x="1260" y="720" width="60" height="60" fill="#0988ed"/><rect x="1320" y="720" width="60" height="60" fill="#0883ea"/><rect x="1380" y="720" width="60" height="60" fill="#067ee7"/><rect x="1440" y="720" width="60" height="60" fill="#0579e2"/><rect x="1500" y="720" width="60" height="60" fill="#0475dd"/><rect x="1560" y="720" width="60" height="60" fill="#0370d7"/><rect x="1620" y="720" width="60" height="60" fill="#036bd1"/><rect x="1680" y="720" width="60" height="60" fill="#0365c8"/><rect x="1740" y="720" width="60" height="60" fill="#035ebf"/><rect x="1800" y="720" width="60" height="60" fill="#0358b5"/><rect x="1860" y="720" width="60" height="60" fill="#0352ab"/><rect x="1920" y="720" width="60" height="60" fill="#034fa6"/><rect x="1980" y="720" width="60" height="60" fill="#034fa6"/><rect x="-60" y="780" width="60" height="60" fill="#05aaf3"/><rect x="0" y="780" width="60" height="60" fill="#0cb1f4"/><rect x="60" y="780" width="60" height="60" fill="#1fbff5"/><rect x="120" y="780" width="60" height="60" fill="#39cdf7"/><rect x="180" y="780" width="60" height="60" fill="#5adbf8"/><rect x="240" y="780" width="60" height="60" fill="#7be5f9"/><rect x="300" y="780" width="60" height="60" fill="#91ebfa"/><rect x="360" y="780" width="60" height="60" fill="#95ecfa"/><rect x="420" y="780" width="60" height="60" fill="#8de9fa"/><rect x="480" y="780" width="60" height="60" fill="#7fe4fa"/><rect x="540" y="780" width="60" height="60" fill="#6ddefa"/><rect x="600" y="780" width="60" height="60" fill="#5dd6fa"/><rect x="660" y="780" width="60" height="60" fill="#50cff9"/><rect x="720" y="780" width="60" height="60" fill="#44c7f8"/><rect x="780" y="780" width="60" height="60" fill="#3abff7"/><rect x="840" y="780" width="60" height="60" fill="#32b8f6"/><rect x="900" y="780" width="60" height="60" fill="#2ab1f5"/><rect x="960" y="780" width="60" height="60" fill="#24aaf4"/><rect x="1020" y="780" width="60" height="60" fill="#1da3f4"/><rect x="1080" y="780" width="60" height="60" fill="#169cf3"/><rect x="1140" y="780" width="60" height="60" fill="#1096f3"/><rect x="1200" y="780" width="60" height="60" fill="#0c90f2"/><rect x="1260" y="780" width="60" height="60" fill="#0b8cf0"/><rect x="1320" y="780" width="60" height="60" fill="#0a87ed"/><rect x="1380" y="780" width="60" height="60" fill="#0881e9"/><rect x="1440" y="780" width="60" height="60" fill="#067be5"/><rect x="1500" y="780" width="60" height="60" fill="#0476e0"/><rect x="1560" y="780" width="60" height="60" fill="#0471da"/><rect x="1620" y="780" width="60" height="60" fill="#036bd3"/><rect x="1680" y="780" width="60" height="60" fill="#0365cb"/><rect x="1740" y="780" width="60" height="60" fill="#035fc1"/><rect x="1800" y="780" width="60" height="60" fill="#0358b7"/><rect x="1860" y="780" width="60" height="60" fill="#0352ad"/><rect x="1920" y="780" width="60" height="60" fill="#0350a8"/><rect x="1980" y="780" width="60" height="60" fill="#0350a8"/><rect x="-60" y="840" width="60" height="60" fill="#04abf4"/><rect x="0" y="840" width="60" height="60" fill="#0ab0f5"/><rect x="60" y="840" width="60" height="60" fill="#1abcf6"/><rect x="120" y="840" width="60" height="60" fill="#32caf7"/><rect x="180" y="840" width="60" height="60" fill="#50d6f7"/><rect x="240" y="840" width="60" height="60" fill="#70e0f8"/><rect x="300" y="840" width="60" height="60" fill="#86e7f9"/><rect x="360" y="840" width="60" height="60" fill="#8ee9f9"/><rect x="420" y="840" width="60" height="60" fill="#89e7f9"/><rect x="480" y="840" width="60" height="60" fill="#7ae2f9"/><rect x="540" y="840" width="60" height="60" fill="#68dcfa"/><rect x="600" y="840" width="60" height="60" fill="#57d5fa"/><rect x="660" y="840" width="60" height="60" fill="#4bcffa"/><rect x="720" y="840" width="60" height="60" fill="#40c8f9"/><rect x="780" y="840" width="60" height="60" fill="#37c1f8"/><rect x="840" y="840" width="60" height="60" fill="#30baf7"/><rect x="900" y="840" width="60" height="60" fill="#2ab4f6"/><rect x="960" y="840" width="60" height="60" fill="#25adf5"/><rect x="1020" y="840" width="60" height="60" fill="#1ea7f5"/><rect x="1080" y="840" width="60" height="60" fill="#18a0f5"/><rect x="1140" y="840" width="60" height="60" fill="#1299f5"/><rect x="1200" y="840" width="60" height="60" fill="#0e94f4"/><rect x="1260" y="840" width="60" height="60" fill="#0e90f2"/><rect x="1320" y="840" width="60" height="60" fill="#0d8bef"/><rect x="1380" y="840" width="60" height="60" fill="#0a84eb"/><rect x="1440" y="840" width="60" height="60" fill="#077de7"/><rect x="1500" y="840" width="60" height="60" fill="#0476e2"/><rect x="1560" y="840" width="60" height="60" fill="#0371dc"/><rect x="1620" y="840" width="60" height="60" fill="#036cd5"/><rect x="1680" y="840" width="60" height="60" fill="#0365cd"/><rect x="1740" y="840" width="60" height="60" fill="#035fc3"/><rect x="1800" y="840" width="60" height="60" fill="#0359b9"/><rect x="1860" y="840" width="60" height="60" fill="#0353ae"/><rect x="1920" y="840" width="60" height="60" fill="#0351a9"/><rect x="1980" y="840" width="60" height="60" fill="#0351a9"/><rect x="-60" y="900" width="60" height="60" fill="#04acf5"/><rect x="0" y="900" width="60" height="60" fill="#08b0f5"/><rect x="60" y="900" width="60" height="60" fill="#13baf6"/><rect x="120" y="900" width="60" height="60" fill="#26c6f6"/><rect x="180" y="900" width="60" height="60" fill="#41d1f7"/><rect x="240" y="900" width="60" height="60" fill="#60dbf7"/><rect x="300" y="900" width="60" height="60" fill="#79e1f7"/><rect x="360" y="900" width="60" height="60" fill="#85e4f7"/><rect x="420" y="900" width="60" height="60" fill="#81e3f7"/><rect x="480" y="900" width="60" height="60" fill="#72def7"/><rect x="540" y="900" width="60" height="60" fill="#5fd8f8"/><rect x="600" y="900" width="60" height="60" fill="#4ed1fa"/><rect x="660" y="900" width="60" height="60" fill="#43ccfa"/><rect x="720" y="900" width="60" height="60" fill="#39c5fa"/><rect x="780" y="900" width="60" height="60" fill="#32bff9"/><rect x="840" y="900" width="60" height="60" fill="#2cbaf8"/><rect x="900" y="900" width="60" height="60" fill="#28b4f7"/><rect x="960" y="900" width="60" height="60" fill="#24aff6"/><rect x="1020" y="900" width="60" height="60" fill="#20a9f6"/><rect x="1080" y="900" width="60" height="60" fill="#1ba3f6"/><rect x="1140" y="900" width="60" height="60" fill="#169df6"/><rect x="1200" y="900" width="60" height="60" fill="#1399f5"/><rect x="1260" y="900" width="60" height="60" fill="#1395f3"/><rect x="1320" y="900" width="60" height="60" fill="#118ff0"/><rect x="1380" y="900" width="60" height="60" fill="#0c86ec"/><rect x="1440" y="900" width="60" height="60" fill="#077de8"/><rect x="1500" y="900" width="60" height="60" fill="#0476e3"/><rect x="1560" y="900" width="60" height="60" fill="#0371dd"/><rect x="1620" y="900" width="60" height="60" fill="#036cd6"/><rect x="1680" y="900" width="60" height="60" fill="#0365ce"/><rect x="1740" y="900" width="60" height="60" fill="#035fc4"/><rect x="1800" y="900" width="60" height="60" fill="#0359ba"/><rect x="1860" y="900" width="60" height="60" fill="#0354af"/><rect x="1920" y="900" width="60" height="60" fill="#0352aa"/><rect x="1980" y="900" width="60" height="60" fill="#0352aa"/><rect x="-60" y="960" width="60" height="60" fill="#06b0f5"/><rect x="0" y="960" width="60" height="60" fill="#09b3f5"/><rect x="60" y="960" width="60" height="60" fill="#0ebbf5"/><rect x="120" y="960" width="60" height="60" fill="#19c3f5"/><rect x="180" y="960" width="60" height="60" fill="#32ccf6"/><rect x="240" y="960" width="60" height="60" fill="#51d5f6"/><rect x="300" y="960" width="60" height="60" fill="#6cdcf6"/><rect x="360" y="960" width="60" height="60" fill="#7bdff6"/><rect x="420" y="960" width="60" height="60" fill="#79def5"/><rect x="480" y="960" width="60" height="60" fill="#67d9f6"/><rect x="540" y="960" width="60" height="60" fill="#54d2f7"/><rect x="600" y="960" width="60" height="60" fill="#42cbf9"/><rect x="660" y="960" width="60" height="60" fill="#35c4fa"/><rect x="720" y="960" width="60" height="60" fill="#2ec0fa"/><rect x="780" y="960" width="60" height="60" fill="#2abcf9"/><rect x="840" y="960" width="60" height="60" fill="#27b8f8"/><rect x="900" y="960" width="60" height="60" fill="#25b4f7"/><rect x="960" y="960" width="60" height="60" fill="#23aff6"/><rect x="1020" y="960" width="60" height="60" fill="#21abf6"/><rect x="1080" y="960" width="60" height="60" fill="#1da6f6"/><rect x="1140" y="960" width="60" height="60" fill="#1aa1f5"/><rect x="1200" y="960" width="60" height="60" fill="#189cf4"/><rect x="1260" y="960" width="60" height="60" fill="#1798f3"/><rect x="1320" y="960" width="60" height="60" fill="#1390f0"/><rect x="1380" y="960" width="60" height="60" fill="#0d86ed"/><rect x="1440" y="960" width="60" height="60" fill="#077de9"/><rect x="1500" y="960" width="60" height="60" fill="#0375e4"/><rect x="1560" y="960" width="60" height="60" fill="#0270de"/><rect x="1620" y="960" width="60" height="60" fill="#036bd7"/><rect x="1680" y="960" width="60" height="60" fill="#0365cf"/><rect x="1740" y="960" width="60" height="60" fill="#035ec5"/><rect x="1800" y="960" width="60" height="60" fill="#0359ba"/><rect x="1860" y="960" width="60" height="60" fill="#0355af"/><rect x="1920" y="960" width="60" height="60" fill="#0352aa"/><rect x="1980" y="960" width="60" height="60" fill="#0352aa"/><rect x="-60" y="1020" width="60" height="60" fill="#0cb4f5"/><rect x="0" y="1020" width="60" height="60" fill="#0db7f5"/><rect x="60" y="1020" width="60" height="60" fill="#0fbcf5"/><rect x="120" y="1020" width="60" height="60" fill="#16c2f5"/><rect x="180" y="1020" width="60" height="60" fill="#2bcaf5"/><rect x="240" y="1020" width="60" height="60" fill="#46d1f5"/><rect x="300" y="1020" width="60" height="60" fill="#5fd7f5"/><rect x="360" y="1020" width="60" height="60" fill="#6fdaf5"/><rect x="420" y="1020" width="60" height="60" fill="#6dd8f5"/><rect x="480" y="1020" width="60" height="60" fill="#5dd3f5"/><rect x="540" y="1020" width="60" height="60" fill="#4accf7"/><rect x="600" y="1020" width="60" height="60" fill="#37c4f8"/><rect x="660" y="1020" width="60" height="60" fill="#29bdfa"/><rect x="720" y="1020" width="60" height="60" fill="#24bafa"/><rect x="780" y="1020" width="60" height="60" fill="#22b8f9"/><rect x="840" y="1020" width="60" height="60" fill="#22b5f9"/><rect x="900" y="1020" width="60" height="60" fill="#21b2f8"/><rect x="960" y="1020" width="60" height="60" fill="#21aff7"/><rect x="1020" y="1020" width="60" height="60" fill="#21abf6"/><rect x="1080" y="1020" width="60" height="60" fill="#1fa7f5"/><rect x="1140" y="1020" width="60" height="60" fill="#1da2f5"/><rect x="1200" y="1020" width="60" height="60" fill="#1a9ef4"/><rect x="1260" y="1020" width="60" height="60" fill="#1898f2"/><rect x="1320" y="1020" width="60" height="60" fill="#1390f0"/><rect x="1380" y="1020" width="60" height="60" fill="#0d86ed"/><rect x="1440" y="1020" width="60" height="60" fill="#077ce9"/><rect x="1500" y="1020" width="60" height="60" fill="#0374e4"/><rect x="1560" y="1020" width="60" height="60" fill="#026fde"/><rect x="1620" y="1020" width="60" height="60" fill="#026ad7"/><rect x="1680" y="1020" width="60" height="60" fill="#0264cf"/><rect x="1740" y="1020" width="60" height="60" fill="#025ec5"/><rect x="1800" y="1020" width="60" height="60" fill="#0358bb"/><rect x="1860" y="1020" width="60" height="60" fill="#0354b1"/><rect x="1920" y="1020" width="60" height="60" fill="#0351ac"/><rect x="1980" y="1020" width="60" height="60" fill="#0351ac"/><rect x="-60" y="1080" width="60" height="60" fill="#0eb6f5"/><rect x="0" y="1080" width="60" height="60" fill="#10b9f5"/><rect x="60" y="1080" width="60" height="60" fill="#11bdf5"/><rect x="120" y="1080" width="60" height="60" fill="#18c2f5"/><rect x="180" y="1080" width="60" height="60" fill="#2ac9f5"/><rect x="240" y="1080" width="60" height="60" fill="#42cff5"/><rect x="300" y="1080" width="60" height="60" fill="#58d4f5"/><rect x="360" y="1080" width="60" height="60" fill="#66d7f5"/><rect x="420" y="1080" width="60" height="60" fill="#66d5f5"/><rect x="480" y="1080" width="60" height="60" fill="#58d0f5"/><rect x="540" y="1080" width="60" height="60" fill="#45c9f6"/><rect x="600" y="1080" width="60" height="60" fill="#34c2f8"/><rect x="660" y="1080" width="60" height="60" fill="#26bbf9"/><rect x="720" y="1080" width="60" height="60" fill="#21b8fa"/><rect x="780" y="1080" width="60" height="60" fill="#1fb6f9"/><rect x="840" y="1080" width="60" height="60" fill="#1fb4f9"/><rect x="900" y="1080" width="60" height="60" fill="#20b1f8"/><rect x="960" y="1080" width="60" height="60" fill="#20aef7"/><rect x="1020" y="1080" width="60" height="60" fill="#20abf6"/><rect x="1080" y="1080" width="60" height="60" fill="#1fa7f5"/><rect x="1140" y="1080" width="60" height="60" fill="#1da3f4"/><rect x="1200" y="1080" width="60" height="60" fill="#1b9df4"/><rect x="1260" y="1080" width="60" height="60" fill="#1797f2"/><rect x="1320" y="1080" width="60" height="60" fill="#138ff0"/><rect x="1380" y="1080" width="60" height="60" fill="#0d86ed"/><rect x="1440" y="1080" width="60" height="60" fill="#077ce9"/><rect x="1500" y="1080" width="60" height="60" fill="#0374e4"/><rect x="1560" y="1080" width="60" height="60" fill="#026ede"/><rect x="1620" y="1080" width="60" height="60" fill="#0269d7"/><rect x="1680" y="1080" width="60" height="60" fill="#0263ce"/><rect x="1740" y="1080" width="60" height="60" fill="#025ec5"/><rect x="1800" y="1080" width="60" height="60" fill="#0358bb"/><rect x="1860" y="1080" width="60" height="60" fill="#0353b2"/><rect x="1920" y="1080" width="60" height="60" fill="#0351ad"/><rect x="1980" y="1080" width="60" height="60" fill="#0351ad"/><rect x="-60" y="1140" width="60" height="60" fill="#0eb6f5"/><rect x="0" y="1140" width="60" height="60" fill="#10b9f5"/><rect x="60" y="1140" width="60" height="60" fill="#11bdf5"/><rect x="120" y="1140" width="60" height="60" fill="#18c2f5"/><rect x="180" y="1140" width="60" height="60" fill="#2ac9f5"/><rect x="240" y="1140" width="60" height="60" fill="#42cff5"/><rect x="300" y="1140" width="60" height="60" fill="#58d4f5"/><rect x="360" y="1140" width="60" height="60" fill="#66d7f5"/><rect x="420" y="1140" width="60" height="60" fill="#66d5f5"/><rect x="480" y="1140" width="60" height="60" fill="#58d0f5"/><rect x="540" y="1140" width="60" height="60" fill="#45c9f6"/><rect x="600" y="1140" width="60" height="60" fill="#34c2f8"/><rect x="660" y="1140" width="60" height="60" fill="#26bbf9"/><rect x="720" y="1140" width="60" height="60" fill="#21b8fa"/><rect x="780" y="1140" width="60" height="60" fill="#1fb6f9"/><rect x="840" y="1140" width="60" height="60" fill="#1fb4f9"/><rect x="900" y="1140" width="60" height="60" fill="#20b1f8"/><rect x="960" y="1140" width="60" height="60" fill="#20aef7"/><rect x="1020" y="1140" width="60" height="60" fill="#20abf6"/><rect x="1080" y="1140" width="60" height="60" fill="#1fa7f5"/><rect x="1140" y="1140" width="60" height="60" fill="#1da3f4"/><rect x="1200" y="1140" width="60" height="60" fill="#1b9df4"/><rect x="1260" y="1140" width="60" height="60" fill="#1797f2"/><rect x="1320" y="1140" width="60" height="60" fill="#138ff0"/><rect x="1380" y="1140" width="60" height="60" fill="#0d86ed"/><rect x="1440" y="1140" width="60" height="60" fill="#077ce9"/><rect x="1500" y="1140" width="60" height="60" fill="#0374e4"/><rect x="1560" y="1140" width="60" height="60" fill="#026ede"/><rect x="1620" y="1140" width="60" height="60" fill="#0269d7"/><rect x="1680" y="1140" width="60" height="60" fill="#0263ce"/><rect x="1740" y="1140" width="60" height="60" fill="#025ec5"/><rect x="1800" y="1140" width="60" height="60" fill="#0358bb"/><rect x="1860" y="1140" width="60" height="60" fill="#0353b2"/><rect x="1920" y="1140" width="60" height="60" fill="#0351ad"/><rect x="1980" y="1140" width="60" height="60" fill="#0351ad"/></g></svg>
<svg style="position:absolute;left:0;top:0" width="1920" height="1080" viewBox="0 0 1920 1080">
 <defs>
  <filter id="sb1" x="-20%" y="-20%" width="140%" height="140%"><feGaussianBlur stdDeviation="4"/></filter>
  <filter id="sb2" x="-20%" y="-20%" width="140%" height="140%"><feGaussianBlur stdDeviation="0.6"/></filter>
  <filter id="sb3" x="-50%" y="-50%" width="200%" height="200%"><feGaussianBlur stdDeviation="40"/></filter>
 </defs>
 <!-- big soft halo bottom-left -->
 <ellipse cx="470" cy="1100" rx="150" ry="130" fill="none" stroke="rgba(255,255,255,0.10)" stroke-width="18" filter="url(#sb1)"/>
 <!-- streaks bottom-left -->
 <path d="M40 1052 C 140 998, 260 950, 460 870" fill="none" stroke="rgba(255,255,255,0.3)" stroke-width="9" filter="url(#sb1)"/>
 <path d="M40 1052 C 140 998, 260 950, 460 870" fill="none" stroke="rgba(255,255,255,0.75)" stroke-width="2.2" filter="url(#sb2)"/>
 <path d="M118 1052 C 170 985, 260 890, 372 790" fill="none" stroke="rgba(255,255,255,0.22)" stroke-width="6" filter="url(#sb1)"/>
 <path d="M118 1052 C 170 985, 260 890, 372 790" fill="none" stroke="rgba(255,255,255,0.6)" stroke-width="1.4" filter="url(#sb2)"/>
 <path d="M135 1052 C 190 975, 290 880, 372 818" fill="none" stroke="rgba(255,255,255,0.45)" stroke-width="1.2" filter="url(#sb2)"/>
 <path d="M168 1048 C 210 990, 280 930, 400 890 S 480 866, 540 856" fill="none" stroke="rgba(150,220,60,0.9)" stroke-width="2.2" filter="url(#sb2)"/>
 <path d="M150 1052 C 250 860, 330 760, 372 700" fill="none" stroke="rgba(255,255,255,0.15)" stroke-width="1" filter="url(#sb2)"/>
 <ellipse cx="345" cy="770" rx="60" ry="80" fill="rgba(220,250,255,0.25)" filter="url(#sb3)"/>
 <circle cx="333.3" cy="783.7" r="1.5" fill="rgba(255,255,255,0.9)"/><circle cx="337.0" cy="870.7" r="1.4" fill="rgba(255,255,255,0.85)"/><circle cx="255.6" cy="841.1" r="0.9" fill="rgba(255,255,255,0.6)"/><circle cx="203.7" cy="924.4" r="1.1" fill="rgba(255,255,255,0.7)"/><circle cx="190.7" cy="904.1" r="0.8" fill="rgba(255,255,255,0.6)"/><circle cx="281.5" cy="783.7" r="0.8" fill="rgba(255,255,255,0.5)"/><circle cx="233.3" cy="817.0" r="0.9" fill="rgba(255,255,255,0.6)"/><circle cx="177.8" cy="880.0" r="0.8" fill="rgba(255,255,255,0.5)"/><circle cx="296.3" cy="900.4" r="1.0" fill="rgba(255,255,255,0.6)"/><circle cx="325.9" cy="854.1" r="0.9" fill="rgba(255,255,255,0.6)"/><circle cx="225.9" cy="874.4" r="0.8" fill="rgba(255,255,255,0.5)"/><circle cx="203.7" cy="1026.3" r="1.3" fill="rgba(255,255,255,0.6)"/><circle cx="388.9" cy="939.3" r="0.8" fill="rgba(255,255,255,0.5)"/><circle cx="407.4" cy="894.8" r="0.9" fill="rgba(255,255,255,0.5)"/><circle cx="485.2" cy="911.5" r="0.8" fill="rgba(255,255,255,0.5)"/><circle cx="470.4" cy="1015.2" r="1.1" fill="rgba(255,255,255,0.5)"/><circle cx="522.2" cy="950.4" r="0.8" fill="rgba(255,255,255,0.5)"/><circle cx="318.5" cy="817.0" r="0.8" fill="rgba(255,255,255,0.5)"/><circle cx="274.1" cy="939.3" r="0.8" fill="rgba(255,255,255,0.5)"/><circle cx="433.3" cy="857.8" r="0.8" fill="rgba(255,255,255,0.5)"/><circle cx="350.0" cy="724.4" r="0.9" fill="rgba(255,255,255,0.6)"/>
 <!-- bottom right streak -->
 <path d="M900 940 C 1150 860, 1450 760, 1980 560" fill="none" stroke="rgba(255,255,255,0.035)" stroke-width="60" filter="url(#sb3)"/>
 <path d="M830.7 1045.7 L839.9 1043.4 L849.0 1041.2 L858.0 1039.1 L867.0 1037.0 L875.8 1035.0 L884.6 1033.1 L893.3 1031.2 L901.9 1029.4 L910.4 1027.7 L918.9 1026.1 L927.2 1024.5 L935.4 1023.0 L943.6 1021.5 L951.7 1020.1 L959.6 1018.8 L967.5 1017.6 L975.3 1016.4 L982.9 1015.2 L990.5 1014.2 L998.0 1013.2 L1005.4 1012.2 L1012.7 1011.4 L1019.9 1010.6 L1026.9 1009.8 L1033.9 1009.1 L1040.8 1008.5 L1047.6 1007.9 L1054.2 1007.4 L1060.8 1007.0 L1067.2 1006.5 L1073.5 1006.2 L1079.7 1005.9 L1085.8 1005.6 L1091.8 1005.4 L1097.7 1005.3 L1103.4 1005.1 L1109.1 1005.1 L1114.6 1005.1 L1120.0 1005.1 L1126.0 1005.3 L1132.0 1005.5 L1137.9 1005.7 L1143.8 1006.0 L1149.5 1006.3 L1155.2 1006.7 L1160.8 1007.1 L1166.4 1007.5 L1171.8 1008.0 L1177.2 1008.5 L1182.5 1009.1 L1187.8 1009.7 L1193.0 1010.4 L1198.1 1011.1 L1203.1 1011.9 L1208.1 1012.7 L1213.0 1013.6 L1217.9 1014.5 L1222.6 1015.5 L1227.4 1016.5 L1232.0 1017.5 L1236.6 1018.7 L1241.1 1019.8 L1245.6 1021.0 L1250.1 1022.3 L1254.4 1023.6 L1258.8 1024.9 L1263.0 1026.3 L1267.2 1027.8 L1271.4 1029.3 L1275.5 1030.9 L1279.6 1032.5 L1283.6 1034.2 L1287.6 1035.9 L1291.5 1037.8 L1295.4 1039.6 L1299.3 1041.6 L1303.1 1043.6 L1306.9 1045.7 L1309.2 1046.9 L1311.5 1048.1 L1313.7 1049.3 L1315.8 1050.5 L1318.0 1051.6 L1320.1 1052.8 L1322.1 1053.9 L1324.1 1055.0 L1326.1 1056.1 L1328.1 1057.2 L1330.0 1058.3 L1331.9 1059.4 L1333.7 1060.5 L1335.6 1061.5 L1337.4 1062.6 L1339.1 1063.6 L1340.9 1064.7 L1342.6 1065.7 L1344.3 1066.7 L1346.0 1067.8 L1347.6 1068.8 L1349.2 1069.8 L1350.8 1070.8 L1352.4 1071.8 L1353.9 1072.8 L1355.5 1073.8 L1357.0 1074.8 L1358.5 1075.8 L1360.0 1076.9 L1361.4 1077.9 L1362.9 1078.9 L1364.3 1079.9 L1365.7 1080.9 L1367.2 1081.9 L1368.6 1082.9 L1369.9 1084.0 L1371.3 1085.0 L1372.7 1086.1 L1374.1 1087.1 L1381.9 1076.9 L1380.5 1075.8 L1379.1 1074.7 L1377.7 1073.6 L1376.2 1072.6 L1374.8 1071.5 L1373.3 1070.4 L1371.8 1069.4 L1370.3 1068.3 L1368.8 1067.2 L1367.3 1066.2 L1365.7 1065.1 L1364.2 1064.1 L1362.6 1063.1 L1361.0 1062.0 L1359.4 1061.0 L1357.8 1059.9 L1356.1 1058.9 L1354.4 1057.8 L1352.7 1056.8 L1351.0 1055.7 L1349.3 1054.7 L1347.5 1053.6 L1345.7 1052.5 L1343.9 1051.5 L1342.1 1050.4 L1340.2 1049.3 L1338.3 1048.2 L1336.4 1047.1 L1334.4 1046.0 L1332.4 1044.9 L1330.4 1043.7 L1328.4 1042.6 L1326.3 1041.5 L1324.2 1040.3 L1322.0 1039.1 L1319.8 1037.9 L1317.6 1036.7 L1315.3 1035.5 L1313.1 1034.3 L1309.2 1032.2 L1305.2 1030.1 L1301.1 1028.0 L1297.0 1026.1 L1292.9 1024.2 L1288.7 1022.3 L1284.5 1020.5 L1280.2 1018.8 L1275.9 1017.2 L1271.6 1015.6 L1267.1 1014.1 L1262.7 1012.6 L1258.2 1011.2 L1253.6 1009.9 L1249.0 1008.6 L1244.3 1007.5 L1239.6 1006.3 L1234.8 1005.3 L1229.9 1004.3 L1225.0 1003.3 L1220.1 1002.4 L1215.1 1001.6 L1210.0 1000.8 L1204.9 1000.1 L1199.7 999.4 L1194.4 998.8 L1189.1 998.2 L1183.7 997.7 L1178.3 997.2 L1172.8 996.7 L1167.2 996.4 L1161.6 996.0 L1155.9 995.7 L1150.1 995.5 L1144.2 995.3 L1138.3 995.1 L1132.3 995.0 L1126.2 994.9 L1120.0 994.9 L1114.5 995.0 L1108.9 995.1 L1103.2 995.3 L1097.4 995.5 L1091.4 995.8 L1085.4 996.1 L1079.2 996.5 L1072.9 997.0 L1066.5 997.5 L1060.1 998.0 L1053.5 998.6 L1046.8 999.3 L1039.9 1000.0 L1033.0 1000.8 L1026.0 1001.6 L1018.9 1002.5 L1011.7 1003.5 L1004.4 1004.5 L997.0 1005.5 L989.4 1006.7 L981.8 1007.8 L974.1 1009.1 L966.3 1010.3 L958.4 1011.7 L950.4 1013.1 L942.3 1014.6 L934.2 1016.2 L925.9 1017.8 L917.5 1019.5 L909.1 1021.2 L900.6 1023.1 L891.9 1025.0 L883.2 1026.9 L874.5 1029.0 L865.6 1031.1 L856.6 1033.3 L847.6 1035.5 L838.5 1037.9 L829.3 1040.3 Z" fill="rgba(255,255,255,0.45)" filter="url(#sb1)"/>
 <path d="M830.2 1043.7 L839.4 1041.4 L848.5 1039.1 L857.5 1036.9 L866.5 1034.8 L875.3 1032.8 L884.1 1030.8 L892.8 1028.9 L901.4 1027.1 L909.9 1025.4 L918.4 1023.7 L926.7 1022.1 L935.0 1020.5 L943.1 1019.0 L951.2 1017.6 L959.2 1016.3 L967.1 1015.0 L974.9 1013.7 L982.5 1012.6 L990.1 1011.5 L997.6 1010.4 L1005.0 1009.5 L1012.3 1008.6 L1019.5 1007.7 L1026.6 1006.9 L1033.6 1006.2 L1040.5 1005.5 L1047.3 1004.9 L1053.9 1004.3 L1060.5 1003.8 L1067.0 1003.4 L1073.3 1003.0 L1079.5 1002.6 L1085.7 1002.3 L1091.7 1002.1 L1097.6 1001.9 L1103.4 1001.7 L1109.0 1001.6 L1114.6 1001.6 L1120.0 1001.6 L1126.1 1001.7 L1132.1 1001.9 L1138.1 1002.1 L1143.9 1002.3 L1149.7 1002.6 L1155.4 1002.9 L1161.1 1003.3 L1166.7 1003.7 L1172.2 1004.2 L1177.6 1004.7 L1183.0 1005.2 L1188.2 1005.8 L1193.5 1006.5 L1198.6 1007.1 L1203.7 1007.9 L1208.7 1008.7 L1213.7 1009.5 L1218.6 1010.4 L1223.5 1011.3 L1228.2 1012.3 L1232.9 1013.4 L1237.6 1014.5 L1242.2 1015.6 L1246.8 1016.9 L1251.2 1018.1 L1255.7 1019.4 L1260.1 1020.8 L1264.4 1022.2 L1268.7 1023.7 L1272.9 1025.2 L1277.1 1026.8 L1281.3 1028.5 L1285.3 1030.2 L1289.4 1032.0 L1293.4 1033.8 L1297.4 1035.7 L1301.3 1037.7 L1305.1 1039.7 L1309.0 1041.8 L1311.3 1043.1 L1313.5 1044.3 L1315.8 1045.5 L1317.9 1046.6 L1320.1 1047.8 L1322.2 1049.0 L1324.2 1050.1 L1326.2 1051.2 L1328.2 1052.3 L1330.2 1053.4 L1332.1 1054.5 L1334.0 1055.6 L1335.9 1056.7 L1337.8 1057.8 L1339.6 1058.8 L1341.4 1059.9 L1343.1 1060.9 L1344.8 1062.0 L1346.6 1063.0 L1348.2 1064.1 L1349.9 1065.1 L1351.5 1066.1 L1353.2 1067.1 L1354.8 1068.2 L1356.3 1069.2 L1357.9 1070.2 L1359.4 1071.2 L1360.9 1072.2 L1362.4 1073.3 L1363.9 1074.3 L1365.4 1075.3 L1366.9 1076.3 L1368.3 1077.4 L1369.7 1078.4 L1371.1 1079.4 L1372.5 1080.5 L1373.9 1081.5 L1375.3 1082.6 L1376.7 1083.7 L1379.3 1080.3 L1377.9 1079.3 L1376.5 1078.2 L1375.1 1077.1 L1373.6 1076.1 L1372.2 1075.0 L1370.7 1074.0 L1369.3 1072.9 L1367.8 1071.9 L1366.3 1070.8 L1364.8 1069.8 L1363.3 1068.8 L1361.7 1067.7 L1360.2 1066.7 L1358.6 1065.7 L1357.0 1064.6 L1355.4 1063.6 L1353.8 1062.6 L1352.1 1061.5 L1350.4 1060.5 L1348.7 1059.4 L1347.0 1058.4 L1345.3 1057.3 L1343.5 1056.3 L1341.7 1055.2 L1339.9 1054.1 L1338.0 1053.1 L1336.1 1052.0 L1334.2 1050.9 L1332.3 1049.8 L1330.3 1048.7 L1328.3 1047.6 L1326.3 1046.4 L1324.2 1045.3 L1322.1 1044.1 L1319.9 1043.0 L1317.7 1041.8 L1315.5 1040.6 L1313.3 1039.4 L1311.0 1038.2 L1307.1 1036.0 L1303.2 1034.0 L1299.2 1032.0 L1295.2 1030.0 L1291.1 1028.1 L1287.0 1026.3 L1282.8 1024.6 L1278.6 1022.9 L1274.4 1021.3 L1270.1 1019.7 L1265.8 1018.2 L1261.4 1016.8 L1256.9 1015.4 L1252.4 1014.1 L1247.8 1012.8 L1243.2 1011.6 L1238.6 1010.5 L1233.8 1009.4 L1229.1 1008.4 L1224.2 1007.4 L1219.3 1006.5 L1214.4 1005.7 L1209.4 1004.9 L1204.3 1004.1 L1199.1 1003.4 L1193.9 1002.7 L1188.7 1002.1 L1183.3 1001.6 L1177.9 1001.1 L1172.5 1000.6 L1166.9 1000.2 L1161.3 999.8 L1155.6 999.5 L1149.9 999.2 L1144.1 999.0 L1138.2 998.8 L1132.2 998.6 L1126.1 998.5 L1120.0 998.4 L1114.5 998.5 L1109.0 998.6 L1103.3 998.7 L1097.5 998.9 L1091.6 999.1 L1085.5 999.4 L1079.4 999.8 L1073.1 1000.2 L1066.8 1000.6 L1060.3 1001.1 L1053.7 1001.7 L1047.0 1002.3 L1040.2 1003.0 L1033.4 1003.7 L1026.4 1004.5 L1019.2 1005.4 L1012.0 1006.3 L1004.7 1007.2 L997.3 1008.3 L989.8 1009.3 L982.2 1010.5 L974.5 1011.7 L966.7 1012.9 L958.8 1014.3 L950.9 1015.7 L942.8 1017.1 L934.6 1018.6 L926.4 1020.2 L918.0 1021.9 L909.6 1023.6 L901.1 1025.4 L892.4 1027.3 L883.7 1029.2 L875.0 1031.2 L866.1 1033.3 L857.2 1035.4 L848.1 1037.7 L839.0 1040.0 L829.8 1042.3 Z" fill="rgba(255,255,255,0.95)" filter="url(#sb2)"/>
 <path d="M1780 1045 C 1830 1030, 1880 1018, 1925 1008" fill="none" stroke="rgba(255,255,255,0.12)" stroke-width="3" filter="url(#sb1)"/>
 <!-- top right faint streak -->
 <defs><linearGradient id="trs" gradientUnits="userSpaceOnUse" x1="1872" y1="0" x2="1640" y2="260"><stop offset="0" stop-color="rgba(180,210,245,0.45)"/><stop offset="1" stop-color="rgba(180,210,245,0)"/></linearGradient></defs>
 <path d="M1872 0 Q 1760 110, 1640 260" fill="none" stroke="url(#trs)" stroke-width="1.2" filter="url(#sb2)"/>
 <path d="M1800 -20 Q 1700 60, 1560 160" fill="none" stroke="rgba(180,210,245,0.05)" stroke-width="40" filter="url(#sb3)"/>
</svg>

<div id="win"></div>
<div id="wintitle"></div>
<div id="winleft"></div>
<div id="winright"></div>
<div id="winbottom"></div>
<div id="content"></div>
<div id="lpanel"></div>


<!-- nav bar -->
<svg style="position:absolute;left:378px;top:222px" width="72" height="34" viewBox="0 0 72 34">
 <defs>
  <linearGradient id="bk" x1="0" y1="0" x2="0" y2="1">
   <stop offset="0" stop-color="#c8d8f4"/><stop offset="0.25" stop-color="#8aa8e8"/><stop offset="0.48" stop-color="#3a60c8"/><stop offset="0.52" stop-color="#06209a"/><stop offset="0.75" stop-color="#1870e0"/><stop offset="1" stop-color="#70f4ff"/>
  </linearGradient>
  <linearGradient id="fw" x1="0" y1="0" x2="0" y2="1">
   <stop offset="0" stop-color="#e8f0f8"/><stop offset="0.48" stop-color="#c4d4e4"/><stop offset="0.52" stop-color="#a8bcd0"/><stop offset="1" stop-color="#d8e8f4"/>
  </linearGradient>
 </defs>
 <path d="M15.5 3.5 Q29.5 3.5 29.5 6 Q29.5 3.5 43.5 3.5 A13 13 0 0 1 43.5 29.5 Q29.5 29.5 29.5 27 Q29.5 29.5 15.5 29.5 A13 13 0 0 1 15.5 3.5 Z" fill="rgba(140,175,210,0.35)" stroke="rgba(50,80,120,0.45)" stroke-width="1"/>
 <circle cx="15.5" cy="16.5" r="11.5" fill="url(#bk)" stroke="#0a1460" stroke-width="1.2"/>
 <path d="M8 16.5 L15.2 10 Q16.6 9.5 16.8 11 L16.8 14.3 L22 14.3 Q23 14.3 23 15.3 L23 17.7 Q23 18.7 22 18.7 L16.8 18.7 L16.8 22 Q16.6 23.5 15.2 23 Z" fill="#fff"/>
 <circle cx="43.5" cy="16.5" r="11" fill="url(#fw)" stroke="#56687c" stroke-width="1.1"/>
 <path d="M51 16.5 L43.8 10 Q42.4 9.5 42.2 11 L42.2 14.3 L37 14.3 Q36 14.3 36 15.3 L36 17.7 Q36 18.7 37 18.7 L42.2 18.7 L42.2 22 Q42.4 23.5 43.8 23 Z" fill="#bccfe2" stroke="#98acc0" stroke-width="0.6"/>
 <path d="M59.5 14.8 L67.5 14.8 L63.5 18.8 Z" fill="#48a0e8" stroke="#1a5aa8" stroke-width="0.6"/>
</svg>
<div style="position:absolute;left:449px;top:227px;width:1004px;height:22px;box-sizing:border-box;border:1px solid rgba(30,50,80,0.75);border-radius:2px;
 background:linear-gradient(180deg,#d8e4f0 0%,#c8dbeb 50%,#c4d8ea 100%);box-shadow:inset 0 0 0 1px rgba(255,255,255,0.65)"></div>
<div style="position:absolute;left:1427px;top:228px;width:1px;height:20px;background:rgba(40,60,90,0.75)"></div>
<div style="position:absolute;left:1428px;top:228px;width:1px;height:20px;background:rgba(255,255,255,0.75)"></div>
<svg style="position:absolute;left:452px;top:230px" width="16" height="15" viewBox="0 0 16 15">
 <rect x="0.5" y="0.5" width="13" height="11" rx="1" fill="#1a2420" stroke="#58605c"/>
 <path d="M1.5 7 L3.5 7 L4.5 3 L6 9.5 L7.5 4.5 L9 8 L10 6 L12.5 6" fill="none" stroke="#30e050" stroke-width="1"/>
 <rect x="3" y="12" width="11" height="2" fill="#8a9088"/>
</svg>
<svg style="position:absolute;left:475px;top:234px" width="6" height="9"><path d="M0.5 0.5 L5.5 4.5 L0.5 8.5 Z" fill="#000"/></svg>
<svg style="position:absolute;left:589px;top:234px" width="6" height="9"><path d="M0.5 0.5 L5.5 4.5 L0.5 8.5 Z" fill="#000"/></svg>
<svg style="position:absolute;left:780px;top:234px" width="6" height="9"><path d="M0.5 0.5 L5.5 4.5 L0.5 8.5 Z" fill="#000"/></svg>
<div class="a" style="left:489px;top:231px;letter-spacing:-0.23px">Systemsteuerung</div>
<div class="a" style="left:603px;top:231px;letter-spacing:-0.14px">Alle Systemsteuerungselemente</div>
<div class="a" style="left:794px;top:231px;letter-spacing:0.12px">Leistungsinformationen und -tools</div>
<svg style="position:absolute;left:1413px;top:236px" width="10" height="6"><path d="M0.5 0.5 L9.5 0.5 L5 5.5 Z" fill="#0c1a5a"/></svg>
<svg style="position:absolute;left:1431px;top:229px" width="18" height="18" viewBox="0 0 18 18">
 <defs><linearGradient id="rf1" x1="0" y1="0" x2="0" y2="1"><stop offset="0" stop-color="#30b8e8"/><stop offset="1" stop-color="#2a6ad0"/></linearGradient>
 <linearGradient id="rf2" x1="0" y1="0" x2="0" y2="1"><stop offset="0" stop-color="#3a7ae0"/><stop offset="1" stop-color="#0a1a60"/></linearGradient></defs>
 <path d="M7.8 2.5 Q6 4 6.2 8.8" fill="none" stroke="url(#rf1)" stroke-width="1.8" stroke-linecap="round"/>
 <path d="M1.8 8.6 L9.8 8.6 L5.8 13 Z" fill="#3a7ad8"/>
 <path d="M8.8 10.8 L16.8 10.8 L12.8 6.2 Z" fill="#2a68d0"/>
 <path d="M12.6 10.5 Q12.8 14 10.8 15.8" fill="none" stroke="url(#rf2)" stroke-width="1.8" stroke-linecap="round"/>
</svg>
<div style="position:absolute;left:1459px;top:227px;width:102px;height:22px;box-sizing:border-box;border:1px solid rgba(30,50,80,0.7);border-radius:2px;
 background:linear-gradient(180deg,#dfe8f2 0%,#d2e0ee 100%);box-shadow:inset 0 0 0 1px rgba(255,255,255,0.6)"></div>
<div class="a" style="left:1467px;top:231px;font-style:italic;color:#6d6d6d;letter-spacing:-0.1px">Systemsteu...</div>
<svg style="position:absolute;left:1540px;top:230px" width="16" height="16" viewBox="0 0 16 16">
 <circle cx="10" cy="6" r="3.8" fill="none" stroke="#2a7ad8" stroke-width="1.6"/>
 <path d="M7.3 8.7 L2.5 13.5" stroke="#1a4aa8" stroke-width="2.2" stroke-linecap="round"/>
</svg>

<!-- caption buttons -->
<div style="position:absolute;left:1460px;top:192px;width:102px;height:21px;box-sizing:border-box;border:1px solid rgba(20,30,50,0.85);border-top:none;border-radius:0 0 5px 5px;overflow:hidden;
 background:linear-gradient(180deg,rgba(230,240,250,0.55) 0%,rgba(200,220,240,0.45) 45%,rgba(80,120,170,0.55) 50%,rgba(100,140,190,0.5) 85%,rgba(180,210,240,0.6) 100%)">
 <div style="position:absolute;left:55px;top:0;width:46px;height:21px;background:linear-gradient(180deg,#dba59c 0%,#d88c80 40%,#c43a28 52%,#b22a1c 70%,#d46a50 100%);border-left:1px solid rgba(40,10,10,0.7)"></div>
 <div style="position:absolute;left:27px;top:0;width:1px;height:21px;background:rgba(20,30,50,0.7)"></div>
</div>
<div style="position:absolute;left:1468px;top:201px;width:13px;height:5px;box-sizing:border-box;background:#fff;border:1px solid #3a4a5e;border-radius:1px"></div>
<div style="position:absolute;left:1496px;top:197px;width:12px;height:10px;box-sizing:border-box;border:1px solid #3a4a5e;background:#fff;border-radius:1px">
 <div style="position:absolute;left:1px;top:2px;width:8px;height:4px;background:#6a8ab0;border:0"></div></div>
<svg style="position:absolute;left:1532px;top:195px" width="14" height="13" viewBox="0 0 14 13">
 <path d="M2 1.5 L5 1.5 L7 4.5 L9 1.5 L12 1.5 L8.7 6.5 L12 11.5 L9 11.5 L7 8.5 L5 11.5 L2 11.5 L5.3 6.5 Z" fill="#fff" stroke="#4a2a2a" stroke-width="0.8" stroke-linejoin="round"/>
</svg>

<!-- help -->
<svg style="position:absolute;left:1543px;top:258px" width="17" height="17" viewBox="0 0 17 17">
 <defs><radialGradient id="hg" cx="0.4" cy="0.3" r="0.8"><stop offset="0" stop-color="#7aa0f0"/><stop offset="0.5" stop-color="#2a50c0"/><stop offset="1" stop-color="#10288a"/></radialGradient></defs>
 <circle cx="8.5" cy="8.5" r="7.6" fill="url(#hg)" stroke="#7a7a80" stroke-width="1.2"/>
 <text x="8.5" y="13" text-anchor="middle" font-family="Liberation Sans" font-weight="bold" font-size="12" fill="#fff">?</text>
</svg>

<!-- left panel links -->
<div class="a lnk" style="left:407px;top:272px;letter-spacing:-0.2px">Startseite der Systemsteuerung</div>
<div class="a lnk" style="left:407px;top:308px;letter-spacing:-0.28px">Visuelle Effekte anpassen</div>
<div class="a lnk" style="left:407px;top:332px;letter-spacing:-0.07px">Indizierungsoptionen anpassen</div>
<div class="a lnk" style="left:407px;top:355px;letter-spacing:-0.17px">Energieeinstellungen anpassen</div>
<div class="a lnk" style="left:407px;top:378px">Datenträgerbereinigung öffnen</div>
<div class="a lnk" style="left:407px;top:401px">Weitere Tools</div>
<div class="a" style="left:407px;top:802px;color:#7a7a7a">Siehe auch</div>
<div class="a lnk" style="left:407px;top:825px">Wartungscenter</div>


<!-- main content -->
<div class="a" style="left:601px;top:279px;font-size:16px;line-height:18px;color:#0c3aa6;letter-spacing:-0.17px">Bewertung und Verbesserung der Leistung des Computers</div>
<div class="a" style="left:601px;top:312px;letter-spacing:-0.05px">Mithilfe des Windows-Leistungsindex werden wichtige Systemkomponenten anhand einer Skala von 1,0 bis</div>
<div class="a" style="left:601px;top:327px">7,9 bewertet.</div>

<div style="position:absolute;left:601px;top:368px;width:950px;height:2px;background:#c8c8c8"></div>
<div class="a" style="left:601px;top:378px;font-weight:bold">Komponente</div>
<div class="a" style="left:751px;top:378px">Was wurde bewertet</div>
<div class="a" style="left:1335px;top:378px">Teilbewertung</div>
<div class="a" style="left:1432px;top:378px">Gesamtbewertung</div>
<div style="position:absolute;left:601px;top:399px;width:950px;height:1px;background:#cfcfcf"></div>
<div style="position:absolute;left:601px;top:400px;width:810px;height:141px;background:linear-gradient(90deg,#e3e6ec 0%,#e8eaef 20%,#f1f2f5 45%,#fafafb 75%,#fdfdfd 100%)"></div>
<div style="position:absolute;left:1383px;top:400px;width:28px;height:141px;background:#fff"></div>
<div style="position:absolute;left:1383px;top:450px;width:28px;height:25px;background:#e6e8f1"></div>
<div style="position:absolute;left:1383px;top:482px;width:28px;height:25px;background:#e6e8f1"></div>
<div style="position:absolute;left:1411px;top:400px;width:140px;height:141px;background:#e4e7f2"></div>
<div style="position:absolute;left:601px;top:540px;width:950px;height:2px;background:#d4d4d4"></div>

<div class="a" style="left:603px;top:406px;font-weight:bold">Prozessor:</div>
<div class="a" style="left:603px;top:431px;font-weight:bold;letter-spacing:-0.14px">Arbeitsspeicher (RAM):</div>
<div class="a" style="left:603px;top:456px;font-weight:bold">Grafik:</div>
<div class="a" style="left:603px;top:488px;font-weight:bold">Grafik (Spiele):</div>
<div class="a" style="left:603px;top:521px;font-weight:bold">Primäre Festplatte:</div>
<div class="a" style="left:753px;top:406px">Berechnungen pro Sekunde</div>
<div class="a" style="left:753px;top:431px;letter-spacing:-0.1px">Speichervorgänge pro Sekunde</div>
<div class="a" style="left:753px;top:456px">Desktopleistung für Windows Aero</div>
<div class="a" style="left:753px;top:481px">3D-Business- und</div>
<div class="a" style="left:753px;top:496px">Gaminggrafikleistung</div>
<div class="a" style="left:753px;top:521px">Datentransferrate</div>
<div class="a" style="left:1343px;top:406px;width:60px;text-align:right">7,5</div>
<div class="a" style="left:1343px;top:431px;width:60px;text-align:right">7,7</div>
<div class="a" style="left:1343px;top:456px;width:60px;text-align:right">6,5</div>
<div class="a" style="left:1343px;top:488px;width:60px;text-align:right">6,5</div>
<div class="a" style="left:1343px;top:521px;width:60px;text-align:right">7,9</div>

<!-- big score -->

<div class="a" style="left:1411px;top:489px;width:140px;text-align:center">Ergibt sich aus</div>
<div class="a" style="left:1411px;top:504px;width:140px;text-align:center">der niedrigsten</div>
<div class="a" style="left:1411px;top:519px;width:140px;text-align:center">Teilbewertung</div>

<!-- links -->
<div class="a blue" style="left:663px;top:564px;letter-spacing:-0.28px">Was bedeuten diese Werte?</div>
<div class="a blue" style="left:663px;top:602px;letter-spacing:-0.19px">Tipps zum Verbessern der Leistung des</div>
<div class="a blue" style="left:663px;top:617px">Computers</div>
<div class="a blue" style="left:1360px;top:550px">Detaillierte Leistungs- und</div>
<div class="a blue" style="left:1360px;top:565px">Systeminformationen anzeigen und</div>
<div class="a blue" style="left:1360px;top:580px">drucken</div>

<div style="position:absolute;left:601px;top:643px;width:950px;height:66px;box-sizing:border-box;border:1px solid #cdcdcd"></div>
<div class="a blue" style="left:664px;top:662px">Weitere Informationen zu Bewertungen</div>
<div class="a blue" style="left:664px;top:677px">und Software online anzeigen</div>

<div class="a" style="left:601px;top:720px">Die Bewertungen sind aktuell.</div>
<div class="a" style="left:601px;top:735px;letter-spacing:-0.3px">Letzte Aktualisierung: 30.01.2013 20:56:45</div>
<div class="a blue" style="left:1401px;top:720px">Bewertung erneut ausführen</div>



<!-- shields -->
<svg style="position:absolute;left:384px;top:306px" width="16" height="18" viewBox="0 0 16 18">
 <path d="M8 0.8 Q11 2.5 15 2.3 L15 8.5 Q15 14 8 17.3 Q1 14 1 8.5 L1 2.3 Q5 2.5 8 0.8 Z" fill="#c8ccd4" stroke="#7a8088" stroke-width="0.8"/>
 <path d="M8 2.6 L8 9 L2.6 9 L2.6 3.6 Q6 3.6 8 2.6 Z" fill="#2a6ae0"/>
 <path d="M8 2.6 Q10 3.6 13.4 3.6 L13.4 9 L8 9 Z" fill="#f8d020"/>
 <path d="M2.6 9 L8 9 L8 15.4 Q3 13 2.6 9 Z" fill="#f8d020"/>
 <path d="M8 9 L13.4 9 Q13 13 8 15.4 Z" fill="#2a6ae0"/>
</svg>
<svg style="position:absolute;left:1385px;top:718px" width="16" height="18" viewBox="0 0 16 18">
 <path d="M8 0.8 Q11 2.5 15 2.3 L15 8.5 Q15 14 8 17.3 Q1 14 1 8.5 L1 2.3 Q5 2.5 8 0.8 Z" fill="#c8ccd4" stroke="#7a8088" stroke-width="0.8"/>
 <path d="M8 2.6 L8 9 L2.6 9 L2.6 3.6 Q6 3.6 8 2.6 Z" fill="#2a6ae0"/>
 <path d="M8 2.6 Q10 3.6 13.4 3.6 L13.4 9 L8 9 Z" fill="#f8d020"/>
 <path d="M2.6 9 L8 9 L8 15.4 Q3 13 2.6 9 Z" fill="#f8d020"/>
 <path d="M8 9 L13.4 9 Q13 13 8 15.4 Z" fill="#2a6ae0"/>
</svg>
<!-- question icons -->
<svg style="position:absolute;left:615px;top:554px" width="34" height="34" viewBox="0 0 34 34">
 <defs><radialGradient id="qg" cx="0.42" cy="0.3" r="0.75"><stop offset="0" stop-color="#6a8ae8"/><stop offset="0.45" stop-color="#2a48b8"/><stop offset="1" stop-color="#0a1a78"/></radialGradient>
 <linearGradient id="qr" x1="0" y1="0" x2="0" y2="1"><stop offset="0" stop-color="#f0f0f0"/><stop offset="1" stop-color="#7a7a7a"/></linearGradient></defs>
 <circle cx="17" cy="17" r="15.6" fill="url(#qr)" stroke="#3a3a3a" stroke-width="0.8"/>
 <circle cx="17" cy="17" r="13.6" fill="url(#qg)" stroke="#0a1050" stroke-width="0.6"/>
 <path d="M11.5 12.5 Q12 7.5 17.5 7.5 Q23 7.5 23 12 Q23 15 19.5 16.5 Q18.5 17 18.5 19.5 L15.2 19.5 Q15 15.5 17.5 14.2 Q19.5 13.2 19.5 12 Q19.5 10.5 17.3 10.5 Q15 10.5 14.8 12.8 Z" fill="#fff"/>
 <circle cx="16.9" cy="23.5" r="2" fill="#fff"/>
</svg>
<svg style="position:absolute;left:615px;top:600px" width="34" height="34" viewBox="0 0 34 34">
 <circle cx="17" cy="17" r="15.6" fill="url(#qr)" stroke="#3a3a3a" stroke-width="0.8"/>
 <circle cx="17" cy="17" r="13.6" fill="url(#qg)" stroke="#0a1050" stroke-width="0.6"/>
 <path d="M11.5 12.5 Q12 7.5 17.5 7.5 Q23 7.5 23 12 Q23 15 19.5 16.5 Q18.5 17 18.5 19.5 L15.2 19.5 Q15 15.5 17.5 14.2 Q19.5 13.2 19.5 12 Q19.5 10.5 17.3 10.5 Q15 10.5 14.8 12.8 Z" fill="#fff"/>
 <circle cx="16.9" cy="23.5" r="2" fill="#fff"/>
</svg>
<!-- printer -->
<svg style="position:absolute;left:1311px;top:556px" width="36" height="32" viewBox="0 0 36 32">
 <defs>
  <linearGradient id="ptop" x1="0" y1="0" x2="1" y2="1"><stop offset="0" stop-color="#101010"/><stop offset="0.7" stop-color="#404040"/><stop offset="1" stop-color="#909090"/></linearGradient>
  <linearGradient id="pside" x1="0" y1="0" x2="1" y2="0"><stop offset="0" stop-color="#f8f8f8"/><stop offset="1" stop-color="#b8b8b8"/></linearGradient>
  <linearGradient id="pphoto" x1="0" y1="0" x2="1" y2="0"><stop offset="0" stop-color="#3a8ae8"/><stop offset="0.5" stop-color="#4ab06a"/><stop offset="1" stop-color="#1a5ad8"/></linearGradient>
 </defs>
 <path d="M21 3 L33.5 4.7 L29.4 15 L18.7 13 Z" fill="#f6f6f6" stroke="#8a8a8a" stroke-width="0.8"/>
 <path d="M2.4 18 L14.3 12.5 L31.7 15.5 L18.7 21.4 Z" fill="url(#ptop)" stroke="#c8d0d8" stroke-width="0.6"/>
 <path d="M18.7 21.4 L31.7 15.5 L31.5 21.5 L19 27.5 Z" fill="url(#pside)" stroke="#8a8a8a" stroke-width="0.5"/>
 <path d="M2.4 18 L18.7 21.4 L19 27.5 L2.6 24 Z" fill="#e8e8e8" stroke="#7a7a7a" stroke-width="0.5"/>
 <path d="M4 22.2 L16.5 24.6 L14.6 28.8 L2.8 26.2 Z" fill="url(#pphoto)" stroke="#6a6a6a" stroke-width="0.5"/>
 <circle cx="24.5" cy="22" r="0.9" fill="#5ac05a"/>
</svg>
<!-- software box -->
<svg style="position:absolute;left:609px;top:655px" width="42" height="42" viewBox="0 0 42 42">
 <defs>
  <linearGradient id="bxf" x1="0" y1="0" x2="1" y2="0"><stop offset="0" stop-color="#f4f4fa"/><stop offset="1" stop-color="#c8cce8"/></linearGradient>
  <linearGradient id="bxs" x1="0" y1="0" x2="1" y2="0"><stop offset="0" stop-color="#d8dcf0"/><stop offset="1" stop-color="#9aa0c8"/></linearGradient>
  <radialGradient id="cd" cx="0.4" cy="0.35" r="0.7"><stop offset="0" stop-color="#ffffff"/><stop offset="0.5" stop-color="#c0c0c0"/><stop offset="1" stop-color="#8a8a8a"/></radialGradient>
 </defs>
 <path d="M7 2 L26 2 L26 8 L7 8 Z" fill="#dcdff4" stroke="#9a9ec8" stroke-width="0.6"/>
 <path d="M26 7 L33 3 L35 5 L28 10 Z" fill="#c4c8e8" stroke="#8a90c0" stroke-width="0.6"/>
 <path d="M6 9 L27 9 L27 39 L6 39 Z" fill="url(#bxf)" stroke="#9a9ec8" stroke-width="0.6"/>
 <path d="M27 9 L33 6 L33 36 L27 39 Z" fill="url(#bxs)" stroke="#8a90c0" stroke-width="0.6"/>
 <path d="M33 34 Q38 35 39 37 L33 38 Z" fill="rgba(0,0,0,0.12)"/>
 <path d="M17 16 Q24 15 24 24 L20 24 Z" fill="#f0c070"/>
 <path d="M12 15 L18 12 L20 16 Z" fill="#8ac08a" opacity="0.7"/>
 <rect x="2.2" y="13.5" width="2.2" height="23" fill="#1a1a1a"/>
 <circle cx="14.5" cy="27" r="10.5" fill="url(#cd)" stroke="#7a7a7a" stroke-width="0.5"/>
 <path d="M8 22 L13 26" stroke="#60e020" stroke-width="1.6"/>
 <path d="M16 29 L21 33" stroke="#f0d050" stroke-width="1.2" opacity="0.7"/>
 <circle cx="14.5" cy="27" r="2.6" fill="#f4f4f4" stroke="#a8a8a8" stroke-width="0.8"/>
</svg>
<!-- score icon content -->
<svg style="position:absolute;left:1442px;top:409px" width="78" height="78" viewBox="0 0 78 78">
 <defs>
  <linearGradient id="sg" x1="0" y1="0" x2="0" y2="1"><stop offset="0" stop-color="#0a4a88"/><stop offset="0.12" stop-color="#2a68a8"/><stop offset="0.32" stop-color="#4a88c4"/><stop offset="0.6" stop-color="#8ab8e2"/><stop offset="0.88" stop-color="#b8e2f8"/><stop offset="1" stop-color="#70c0ec"/></linearGradient>
  <linearGradient id="sgr" x1="0" y1="0" x2="1" y2="0"><stop offset="0" stop-color="rgba(255,255,255,0.12)"/><stop offset="0.7" stop-color="rgba(0,60,140,0)"/><stop offset="1" stop-color="rgba(0,80,160,0.35)"/></linearGradient>
  <clipPath id="sc"><rect x="0" y="0" width="78" height="78" rx="10"/></clipPath>
 </defs>
 <g clip-path="url(#sc)">
  <rect x="0" y="0" width="78" height="78" fill="url(#sg)"/>
  <rect x="0" y="0" width="78" height="78" fill="url(#sgr)"/>
  <path d="M0 16 Q16 10 32 16 L26 78 L0 78 Z" fill="rgba(200,225,250,0.28)"/>
  <path d="M0 42 Q16 36 34 46 Q56 58 78 46" fill="none" stroke="#3a98d8" stroke-width="2.6"/>
  <path d="M20 78 L29 22 M50 78 L58 26" stroke="#58b0e8" stroke-width="3" opacity="0.55"/>
  <path d="M0 3 L78 3" stroke="rgba(0,30,70,0.5)" stroke-width="5"/>
 </g>
 <g font-family="Liberation Sans" font-weight="bold" font-size="50" letter-spacing="-1.5">
  <text x="7.4" y="59.5" fill="#2a2a2a" opacity="0.85" transform="translate(7.4 0) scale(0.99 1) translate(-7.4 0)">6,5</text>
  <text x="6" y="58" fill="#e6e9f0" transform="translate(6 0) scale(0.99 1) translate(-6 0)">6,5</text>
 </g>
</svg>
<!-- desktop icons -->
<svg style="position:absolute;left:36px;top:6px" width="48" height="52" viewBox="0 0 48 52">
 <defs>
  <linearGradient id="rb" x1="0" y1="0" x2="1" y2="0"><stop offset="0" stop-color="#6aa8e0"/><stop offset="0.4" stop-color="#a8d4f4"/><stop offset="1" stop-color="#3a78c0"/></linearGradient>
  <linearGradient id="rbb" x1="0" y1="0" x2="0" y2="1"><stop offset="0" stop-color="#f0f0f0"/><stop offset="1" stop-color="#a0a8b0"/></linearGradient>
 </defs>
 <path d="M6 6 L42 6 L37 46 Q24 50 11 46 Z" fill="url(#rb)" opacity="0.85" stroke="#5a7a9a" stroke-width="0.8"/>
 <ellipse cx="24" cy="6" rx="18" ry="3.5" fill="#dfe8f0" stroke="#8a9aaa" stroke-width="1.2"/>
 <ellipse cx="24" cy="6" rx="15" ry="2.2" fill="#5a8ab8"/>
 <path d="M11 36 Q24 30 37 36 L36 46 Q24 50 12 46 Z" fill="url(#rbb)" opacity="0.9"/>
 <path d="M16 14 Q20 24 18 34" stroke="#2a5aa0" stroke-width="3" fill="none" opacity="0.5"/>
</svg>
<div class="a" style="left:19px;top:60px;width:81px;text-align:center;color:#fff;text-shadow:0 1px 2px #000,0 0 3px rgba(0,0,0,0.8)">Papierkorb</div>
<svg style="position:absolute;left:34px;top:110px" width="52" height="52" viewBox="0 0 52 52">
 <defs><radialGradient id="cbl" cx="0.45" cy="0.35" r="0.7"><stop offset="0" stop-color="#8ac0f0"/><stop offset="1" stop-color="#2a6ac8"/></radialGradient>
 <linearGradient id="cgl" x1="0" y1="0" x2="0" y2="1"><stop offset="0" stop-color="rgba(255,255,255,0.35)"/><stop offset="0.5" stop-color="rgba(255,255,255,0)"/></linearGradient></defs>
 <path d="M44.68 15.40 A21 21 0 0 0 8.35 13.63 L17.69 29.80 A9.6 9.6 0 0 1 26.00 15.40 Z" fill="#db4437"/><path d="M8.35 13.63 A21 21 0 0 0 24.98 45.97 L34.31 29.80 A9.6 9.6 0 0 1 17.69 29.80 Z" fill="#0f9d58"/><path d="M24.98 45.97 A21 21 0 0 0 44.68 15.40 L26.00 15.40 A9.6 9.6 0 0 1 34.31 29.80 Z" fill="#f4b400"/>
 <circle cx="26" cy="25" r="21" fill="url(#cgl)"/>
 <circle cx="26" cy="25" r="9.6" fill="#f4f4f4"/>
 <circle cx="26" cy="25" r="7.8" fill="url(#cbl)"/>
 <rect x="2.5" y="33.5" width="15" height="14" fill="#e8eef6" stroke="#7a8898"/>
 <path d="M6 45 Q6.5 39 12.5 37.5 L11 35.5 L16 36.5 L14 41 L13 39.3 Q9 40.5 8.2 45 Z" fill="#1a4aa0"/>
</svg>
<div class="a" style="left:10px;top:164px;width:100px;text-align:center;color:#fff;text-shadow:0 1px 2px #000,0 0 3px rgba(0,0,0,0.8)">Google Chrome</div>

<!-- taskbar -->
<div style="position:absolute;left:0;top:1040px;width:1920px;height:40px;backdrop-filter:blur(3px);
 background:linear-gradient(100deg,rgba(255,255,255,0) 0%,rgba(255,255,255,0) 24%,rgba(255,255,255,0.10) 28%,rgba(255,255,255,0) 32%),linear-gradient(90deg,rgba(70,62,92,0.45) 0%,rgba(75,110,170,0.45) 18%,rgba(75,127,194,0.45) 24%,rgba(63,103,156,0.45) 47%,rgba(67,82,114,0.47) 79%,rgba(45,55,80,0.55) 84%,rgba(30,40,62,0.62) 86%,rgba(30,40,62,0.62) 100%);
 border-top:1px solid rgba(10,20,35,0.85);box-sizing:border-box;box-shadow:inset 0 1px 0 rgba(255,255,255,0.25)"></div>
<!-- start orb -->
<svg style="position:absolute;left:6px;top:1040px" width="42" height="40" viewBox="0 0 42 40">
 <defs>
  <linearGradient id="orb" x1="0" y1="0" x2="0" y2="1"><stop offset="0" stop-color="#9aaab8"/><stop offset="0.45" stop-color="#2a4a70"/><stop offset="0.55" stop-color="#0a3a6a"/><stop offset="0.85" stop-color="#1a8ad0"/><stop offset="1" stop-color="#40e0ff"/></linearGradient>
  <linearGradient id="fr" x1="0" y1="0" x2="1" y2="1"><stop offset="0" stop-color="#ff8a30"/><stop offset="1" stop-color="#e03a10"/></linearGradient>
  <linearGradient id="fg" x1="0" y1="0" x2="1" y2="1"><stop offset="0" stop-color="#c8e890"/><stop offset="1" stop-color="#5ab02a"/></linearGradient>
  <linearGradient id="fb" x1="0" y1="0" x2="1" y2="1"><stop offset="0" stop-color="#b8e0ff"/><stop offset="1" stop-color="#1a80d0"/></linearGradient>
  <linearGradient id="fy" x1="0" y1="0" x2="1" y2="1"><stop offset="0" stop-color="#fff0a0"/><stop offset="1" stop-color="#f8a010"/></linearGradient>
 </defs>
 <circle cx="20.7" cy="20.2" r="18.2" fill="url(#orb)" stroke="rgba(200,230,255,0.75)" stroke-width="1"/>
 <circle cx="20.7" cy="20.2" r="19" fill="none" stroke="rgba(10,30,60,0.6)" stroke-width="0.8"/>
 <path d="M10.5 12.5 Q14 10 19.5 11.5 L18 20 Q13 18.5 9.2 20.5 Z" fill="url(#fr)"/>
 <path d="M21 11.8 Q26 14 32.5 11.8 L30.8 21 Q25 22.8 19.6 20.6 Z" fill="url(#fg)"/>
 <path d="M9 22 Q13 20 17.8 21.6 L16.4 30 Q12 28.6 7.6 31 Z" fill="url(#fb)"/>
 <path d="M19.4 22 Q25 24.2 30.6 22.2 L29 31 Q23.5 32.5 18 30.4 Z" fill="url(#fy)"/>
</svg>
<!-- IE -->
<svg style="position:absolute;left:72px;top:1043px" width="36" height="34" viewBox="0 0 36 34">
 <defs><radialGradient id="ieg" cx="0.4" cy="0.35" r="0.7"><stop offset="0" stop-color="#9ae0ff"/><stop offset="0.6" stop-color="#1a8ad8"/><stop offset="1" stop-color="#0a4a98"/></radialGradient></defs>
 <path d="M18 5 C 26 5, 30 11, 29.5 18 L12 18 C 12.5 22, 15 24.5, 19 24.5 C 22 24.5, 24 23, 25 21 L29 21 C 27.5 26.5, 23 29.5, 18 29.5 C 10.5 29.5, 5.5 24, 5.5 17.5 C 5.5 10.5, 10.5 5, 18 5 Z M12.2 14.5 L24.2 14.5 C 23.5 11, 21 9.5, 18 9.5 C 15 9.5, 12.8 11.5, 12.2 14.5 Z" fill="url(#ieg)" stroke="#0a3a78" stroke-width="0.6"/>
 <path d="M4 30 C -2 24, 14 6, 30 3 C 36 2, 36 8, 30 13 C 33 7, 30 5, 26 6.5 C 14 10, 2 24, 6 29 Z" fill="#f0b020" stroke="#a06a10" stroke-width="0.5"/>
</svg>
<!-- explorer -->
<svg style="position:absolute;left:133px;top:1046px" width="36" height="32" viewBox="0 0 36 32">
 <defs><linearGradient id="fold" x1="0" y1="0" x2="0" y2="1"><stop offset="0" stop-color="#fff4c8"/><stop offset="1" stop-color="#e8c470"/></linearGradient></defs>
 <path d="M2 4 L13 4 L15 7 L33 7 L33 29 L2 29 Z" fill="#e0b860" stroke="#b08a40" stroke-width="0.8"/>
 <rect x="5" y="3" width="5" height="3" fill="#3ab03a"/>
 <rect x="14" y="5" width="5" height="3" fill="#d83a2a"/>
 <rect x="24" y="6" width="5" height="3" fill="#2a7ad8"/>
 <path d="M1 11 L34 11 L33 30 L2 30 Z" fill="url(#fold)" stroke="#c09a50" stroke-width="0.8"/>
 <path d="M8 30 L8 22 L27 22 L27 30 L24 30 L24 25 L11 25 L11 30 Z" fill="#8ad0f0" stroke="#4a90c0" stroke-width="0.6"/>
</svg>
<!-- wmp -->
<svg style="position:absolute;left:196px;top:1048px" width="32" height="28" viewBox="0 0 32 28">
 <rect x="3" y="2" width="22" height="24" fill="#9ac4e8" stroke="#5a8ab8" stroke-width="0.8"/>
 <rect x="25" y="3" width="2" height="22" fill="#b8d4ec"/>
 <rect x="27.5" y="4" width="1.5" height="20" fill="#c8dcf0"/>
 <circle cx="14" cy="14" r="8.5" fill="#f07820" stroke="#c05010" stroke-width="0.8"/>
 <path d="M11 9 L19.5 14 L11 19 Z" fill="#fff"/>
</svg>
<!-- chrome -->
<svg style="position:absolute;left:259px;top:1044px" width="32" height="32" viewBox="0 0 32 32">
 <path d="M28.91 9.40 A14.5 14.5 0 0 0 3.83 8.12 L10.28 19.30 A6.6 6.6 0 0 1 16.00 9.40 Z" fill="#db4437"/><path d="M3.83 8.12 A14.5 14.5 0 0 0 15.26 30.48 L21.72 19.30 A6.6 6.6 0 0 1 10.28 19.30 Z" fill="#0f9d58"/><path d="M15.26 30.48 A14.5 14.5 0 0 0 28.91 9.40 L16.00 9.40 A6.6 6.6 0 0 1 21.72 19.30 Z" fill="#f4b400"/>
 <circle cx="16" cy="16" r="14.5" fill="url(#cgl)"/>
 <circle cx="16" cy="16" r="6.6" fill="#f4f4f4"/>
 <circle cx="16" cy="16" r="5.3" fill="url(#cbl)"/>
</svg>
<!-- active control panel button -->
<div style="position:absolute;left:307px;top:1041px;width:60px;height:39px;box-sizing:border-box;border:1px solid rgba(255,255,255,0.7);border-radius:2px;
 background:linear-gradient(180deg,rgba(255,255,255,0.55) 0%,rgba(220,235,250,0.45) 50%,rgba(200,225,245,0.4) 100%);box-shadow:inset 0 0 0 1px rgba(20,40,70,0.35)"></div>
<svg style="position:absolute;left:319px;top:1045px" width="36" height="34" viewBox="0 0 36 34">
 <defs><linearGradient id="cpg" x1="0" y1="0" x2="1" y2="1"><stop offset="0" stop-color="#78bcf0"/><stop offset="1" stop-color="#2a7ad0"/></linearGradient>
 <radialGradient id="mg" cx="0.4" cy="0.3" r="0.8"><stop offset="0" stop-color="#ffffff"/><stop offset="1" stop-color="#8a9098"/></radialGradient></defs>
 <rect x="2.5" y="3" width="31" height="22.5" rx="1.5" fill="url(#cpg)" stroke="#d0e8fc" stroke-width="1.2"/>
 <circle cx="9.5" cy="10.5" r="4" fill="none" stroke="#e8f4ff" stroke-width="1.4"/>
 <path d="M9.5 6 L13.5 8.5 L9.5 10.5 Z" fill="#f8a020"/>
 <rect x="17" y="7.5" width="11" height="3.5" rx="0.5" fill="#e8f4ff"/><rect x="20" y="8.3" width="7" height="2" fill="#3a8ad8"/>
 <rect x="17" y="14" width="11" height="3.5" rx="0.5" fill="#e8f4ff"/><rect x="20" y="14.8" width="7" height="2" fill="#3a8ad8"/>
 <circle cx="8" cy="19.5" r="1.2" fill="#9ad8ff"/><circle cx="11.5" cy="19.5" r="1.3" fill="#f8a020"/>
 <ellipse cx="17.5" cy="28.5" rx="6.5" ry="4.5" fill="url(#mg)" stroke="#707880" stroke-width="0.6"/>
</svg>

<!-- tray -->
<div class="a" style="left:1652px;top:1051px;color:#fff">DE</div>
<svg style="position:absolute;left:1682px;top:1056px" width="10" height="8"><path d="M1 6.5 L5 2 L9 6.5 Z" fill="#f0f4f8"/></svg>
<svg style="position:absolute;left:1703px;top:1052px" width="18" height="18" viewBox="0 0 18 18">
 <rect x="1" y="1" width="16" height="16" fill="#3a3a3a"/>
 <path d="M4 4 L13 3 M4 4 L5 13 L13 14 L13 9 L9 9" fill="none" stroke="#9ae02a" stroke-width="1.5" stroke-dasharray="1.2 0.8"/>
</svg>
<svg style="position:absolute;left:1732px;top:1052px" width="20" height="18" viewBox="0 0 20 18">
 <path d="M3 1 L3 17" stroke="#f0f0f0" stroke-width="1.6"/>
 <path d="M4 2 Q8 0 11 3 Q14 5 16 3 L16 10 Q13 12 10 9 Q7 7 4 9 Z" fill="#f4f4f4" stroke="#8a8a8a" stroke-width="0.5"/>
 <circle cx="13" cy="13" r="4.2" fill="#e02a2a" stroke="#fff" stroke-width="0.8"/>
 <path d="M11 11 L15 15 M15 11 L11 15" stroke="#fff" stroke-width="1.3"/>
</svg>
<svg style="position:absolute;left:1757px;top:1052px" width="18" height="18" viewBox="0 0 18 18">
 <rect x="1.5" y="4" width="10" height="12" fill="#e8e8e8" stroke="#303030" stroke-width="1"/>
 <rect x="3.5" y="2" width="10" height="12" fill="#f4f4f4" stroke="#303030" stroke-width="1"/>
 <path d="M9 7 L15 7 L15 11 Q15 13 12 13 Q9 13 9 11 Z" fill="#fff" stroke="#202020" stroke-width="1"/>
 <path d="M10.5 4 L10.5 7 M13.5 4 L13.5 7 M12 13 L12 17" stroke="#202020" stroke-width="1.2"/>
</svg>
<svg style="position:absolute;left:1782px;top:1054px" width="18" height="14" viewBox="0 0 18 14">
 <rect x="1" y="10" width="2.2" height="3" fill="#fff"/>
 <rect x="4.5" y="8" width="2.2" height="5" fill="#fff"/>
 <rect x="8" y="6" width="2.2" height="7" fill="#e8eef4"/>
 <rect x="11.5" y="3.5" width="2.2" height="9.5" fill="#5a6a7a"/>
 <rect x="15" y="1" width="2.2" height="12" fill="#4a5a6a"/>
</svg>
<svg style="position:absolute;left:1805px;top:1052px" width="18" height="18" viewBox="0 0 18 18">
 <path d="M2 6.5 L5 6.5 L9.5 2.5 L9.5 15.5 L5 11.5 L2 11.5 Z" fill="#f4f4f4" stroke="#404040" stroke-width="0.6"/>
 <path d="M11.5 6.5 Q13 9 11.5 11.5 M13.5 4.5 Q16.5 9 13.5 13.5" fill="none" stroke="#e8e8e8" stroke-width="1.2"/>
</svg>
<div class="a" style="left:1836px;top:1046px;width:62px;text-align:center;color:#fff;letter-spacing:-0.3px">20:56</div>
<div class="a" style="left:1836px;top:1063px;width:62px;text-align:center;color:#fff;letter-spacing:-0.8px">30.01.2013</div>
<div style="position:absolute;left:1906px;top:1041px;width:14px;height:39px;box-sizing:border-box;border:1px solid rgba(200,220,240,0.55);border-right:none;
 background:linear-gradient(135deg,rgba(255,255,255,0.25) 0%,rgba(255,255,255,0.05) 50%,rgba(0,0,0,0.1) 100%)"></div>

<!-- cursor -->
<svg style="position:absolute;left:1553px;top:380px" width="14" height="22" viewBox="0 0 14 22">
 <path d="M1.5 1.5 L1.5 17 L5.2 13.6 L7.8 19.6 L10.2 18.6 L7.8 12.8 L12.5 12.8 Z" fill="#fff" stroke="#101010" stroke-width="1.1" stroke-linejoin="miter"/>
</svg>

</body></html>
